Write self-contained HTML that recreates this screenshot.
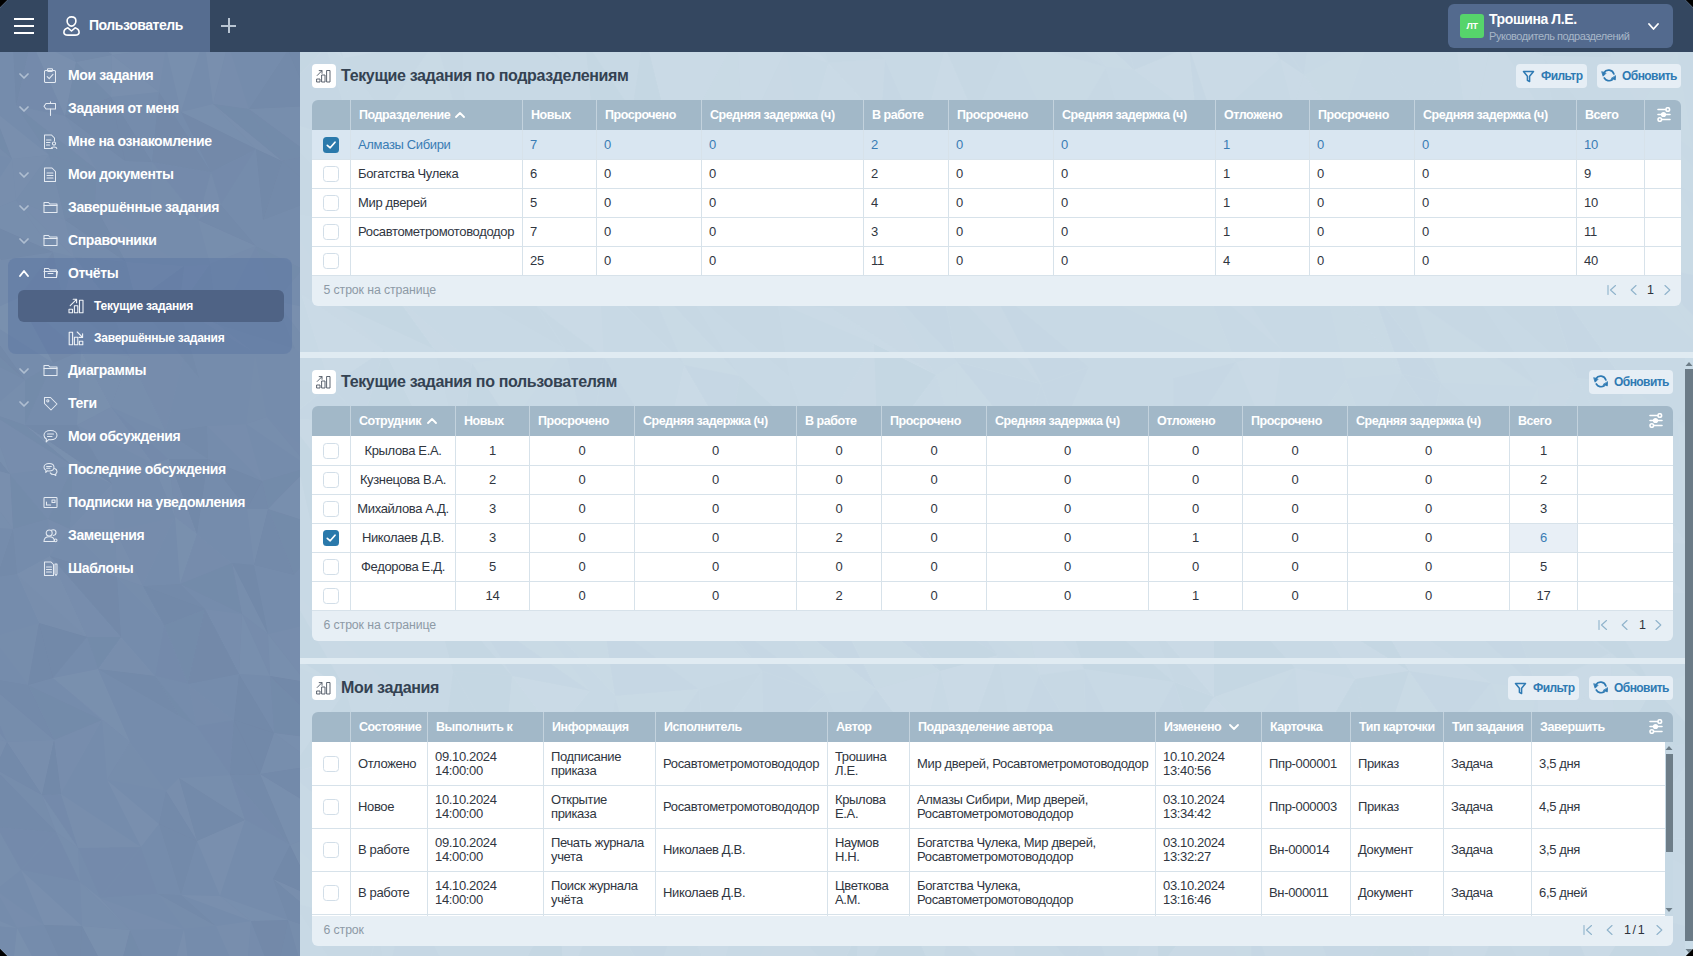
<!DOCTYPE html><html><head><meta charset="utf-8"><title>Отчёты</title><style>
html,body{margin:0;padding:0;width:1693px;height:956px;overflow:hidden;background:#000;font-family:"Liberation Sans", sans-serif;}
#app{position:absolute;left:0;top:0;width:1693px;height:956px;overflow:hidden;background:#c6d7e3;clip-path:polygon(7.5px 0,1685.5px 0,1693px 7.5px,1693px 948.5px,1685.5px 956px,7.5px 956px,0 948.5px,0 7.5px);}
</style></head><body><div id="app">
<div style="position:absolute;left:300px;top:52px;width:1393px;height:904px;background:#c8d9e5;border-radius:0px;"></div>
<svg style="position:absolute;left:300px;top:52px" width="1393" height="904"><polygon points="-92,-75 -10,-80 26,-5" fill="rgba(30,50,80,0.004)"/><polygon points="-92,-75 26,-5 -37,-1" fill="rgba(255,255,255,0.020)"/><polygon points="-10,-80 30,-74 43,6" fill="rgba(30,50,80,0.009)"/><polygon points="-10,-80 43,6 26,-5" fill="rgba(255,255,255,0.047)"/><polygon points="30,-74 75,-77 136,-11" fill="rgba(30,50,80,0.007)"/><polygon points="30,-74 136,-11 43,6" fill="rgba(255,255,255,0.049)"/><polygon points="75,-77 156,-64 163,-8" fill="rgba(255,255,255,0.046)"/><polygon points="75,-77 163,-8 136,-11" fill="rgba(30,50,80,0.008)"/><polygon points="156,-64 191,-87 265,12" fill="rgba(30,50,80,0.005)"/><polygon points="250,-63 339,-100 344,-21" fill="rgba(30,50,80,0.004)"/><polygon points="339,-100 413,-56 437,-15" fill="rgba(255,255,255,0.046)"/><polygon points="339,-100 437,-15 344,-21" fill="rgba(255,255,255,0.033)"/><polygon points="413,-56 486,-3 437,-15" fill="rgba(255,255,255,0.032)"/><polygon points="457,-72 494,-101 528,11" fill="rgba(255,255,255,0.011)"/><polygon points="457,-72 528,11 486,-3" fill="rgba(255,255,255,0.049)"/><polygon points="494,-101 585,7 528,11" fill="rgba(30,50,80,0.005)"/><polygon points="615,-90 667,-80 709,-11" fill="rgba(30,50,80,0.008)"/><polygon points="667,-80 747,-62 806,15" fill="rgba(255,255,255,0.018)"/><polygon points="667,-80 806,15 709,-11" fill="rgba(30,50,80,0.004)"/><polygon points="747,-62 811,-71 834,18" fill="rgba(30,50,80,0.008)"/><polygon points="747,-62 834,18 806,15" fill="rgba(255,255,255,0.031)"/><polygon points="811,-71 870,-70 889,-5" fill="rgba(255,255,255,0.033)"/><polygon points="811,-71 889,-5 834,18" fill="rgba(30,50,80,0.009)"/><polygon points="870,-70 928,-89 980,7" fill="rgba(255,255,255,0.037)"/><polygon points="870,-70 980,7 889,-5" fill="rgba(255,255,255,0.048)"/><polygon points="928,-89 1014,-54 1004,23" fill="rgba(30,50,80,0.007)"/><polygon points="928,-89 1004,23 980,7" fill="rgba(30,50,80,0.008)"/><polygon points="1066,-68 1156,-8 1069,-12" fill="rgba(30,50,80,0.012)"/><polygon points="1160,-99 1243,-83 1243,4" fill="rgba(30,50,80,0.007)"/><polygon points="1160,-99 1243,4 1193,-20" fill="rgba(30,50,80,0.011)"/><polygon points="1243,-83 1307,-83 1311,5" fill="rgba(30,50,80,0.007)"/><polygon points="1243,-83 1311,5 1243,4" fill="rgba(30,50,80,0.011)"/><polygon points="1307,-83 1372,-61 1377,-2" fill="rgba(255,255,255,0.012)"/><polygon points="-37,-1 26,-5 -39,61" fill="rgba(30,50,80,0.010)"/><polygon points="-37,-1 -39,61 -80,96" fill="rgba(255,255,255,0.034)"/><polygon points="26,-5 43,6 56,93" fill="rgba(255,255,255,0.015)"/><polygon points="26,-5 56,93 -39,61" fill="rgba(30,50,80,0.007)"/><polygon points="43,6 136,-11 84,63" fill="rgba(30,50,80,0.003)"/><polygon points="136,-11 163,-8 167,99" fill="rgba(30,50,80,0.005)"/><polygon points="136,-11 167,99 84,63" fill="rgba(255,255,255,0.026)"/><polygon points="163,-8 265,12 201,100" fill="rgba(255,255,255,0.013)"/><polygon points="285,-12 332,59 294,83" fill="rgba(30,50,80,0.010)"/><polygon points="344,-21 437,-15 374,100" fill="rgba(255,255,255,0.040)"/><polygon points="344,-21 374,100 332,59" fill="rgba(30,50,80,0.011)"/><polygon points="437,-15 486,-3 443,88" fill="rgba(255,255,255,0.042)"/><polygon points="437,-15 443,88 374,100" fill="rgba(255,255,255,0.032)"/><polygon points="486,-3 504,94 443,88" fill="rgba(255,255,255,0.020)"/><polygon points="528,11 585,7 581,68" fill="rgba(255,255,255,0.023)"/><polygon points="528,11 581,68 504,94" fill="rgba(255,255,255,0.046)"/><polygon points="585,7 620,89 581,68" fill="rgba(30,50,80,0.006)"/><polygon points="645,-4 709,-11 675,65" fill="rgba(30,50,80,0.003)"/><polygon points="645,-4 675,65 620,89" fill="rgba(255,255,255,0.046)"/><polygon points="709,-11 806,15 759,95" fill="rgba(255,255,255,0.030)"/><polygon points="806,15 821,67 759,95" fill="rgba(30,50,80,0.004)"/><polygon points="834,18 889,-5 896,64" fill="rgba(255,255,255,0.047)"/><polygon points="889,-5 980,7 913,67" fill="rgba(255,255,255,0.044)"/><polygon points="889,-5 913,67 896,64" fill="rgba(30,50,80,0.007)"/><polygon points="980,7 1004,23 993,57" fill="rgba(255,255,255,0.045)"/><polygon points="1004,23 1069,-12 1040,72" fill="rgba(255,255,255,0.035)"/><polygon points="1004,23 1040,72 993,57" fill="rgba(255,255,255,0.045)"/><polygon points="1069,-12 1156,-8 1119,60" fill="rgba(255,255,255,0.014)"/><polygon points="1156,-8 1193,-20 1169,97" fill="rgba(255,255,255,0.046)"/><polygon points="1193,-20 1259,86 1169,97" fill="rgba(255,255,255,0.038)"/><polygon points="1243,4 1305,82 1259,86" fill="rgba(30,50,80,0.003)"/><polygon points="1311,5 1377,-2 1339,56" fill="rgba(255,255,255,0.022)"/><polygon points="1377,-2 1465,-1 1393,98" fill="rgba(255,255,255,0.017)"/><polygon points="1377,-2 1393,98 1339,56" fill="rgba(255,255,255,0.037)"/><polygon points="-80,96 -14,163 -41,178" fill="rgba(30,50,80,0.009)"/><polygon points="-39,61 68,167 -14,163" fill="rgba(30,50,80,0.005)"/><polygon points="56,93 84,63 120,180" fill="rgba(255,255,255,0.047)"/><polygon points="84,63 167,99 169,158" fill="rgba(255,255,255,0.036)"/><polygon points="84,63 169,158 120,180" fill="rgba(255,255,255,0.049)"/><polygon points="167,99 201,100 260,175" fill="rgba(30,50,80,0.007)"/><polygon points="167,99 260,175 169,158" fill="rgba(30,50,80,0.003)"/><polygon points="201,100 294,83 320,166" fill="rgba(30,50,80,0.005)"/><polygon points="201,100 320,166 260,175" fill="rgba(255,255,255,0.042)"/><polygon points="294,83 332,59 383,176" fill="rgba(255,255,255,0.021)"/><polygon points="332,59 374,100 422,165" fill="rgba(255,255,255,0.021)"/><polygon points="332,59 422,165 383,176" fill="rgba(30,50,80,0.004)"/><polygon points="443,88 504,94 545,170" fill="rgba(255,255,255,0.028)"/><polygon points="504,94 581,68 626,159" fill="rgba(30,50,80,0.011)"/><polygon points="504,94 626,159 545,170" fill="rgba(30,50,80,0.004)"/><polygon points="581,68 620,89 675,150" fill="rgba(30,50,80,0.009)"/><polygon points="581,68 675,150 626,159" fill="rgba(30,50,80,0.009)"/><polygon points="620,89 733,161 675,150" fill="rgba(30,50,80,0.007)"/><polygon points="759,95 821,67 873,174" fill="rgba(30,50,80,0.012)"/><polygon points="759,95 873,174 769,163" fill="rgba(255,255,255,0.041)"/><polygon points="821,67 896,64 920,151" fill="rgba(255,255,255,0.034)"/><polygon points="821,67 920,151 873,174" fill="rgba(255,255,255,0.028)"/><polygon points="913,67 1026,172 980,160" fill="rgba(255,255,255,0.030)"/><polygon points="993,57 1040,72 1069,168" fill="rgba(255,255,255,0.033)"/><polygon points="993,57 1069,168 1026,172" fill="rgba(30,50,80,0.003)"/><polygon points="1040,72 1119,60 1126,161" fill="rgba(30,50,80,0.009)"/><polygon points="1040,72 1126,161 1069,168" fill="rgba(30,50,80,0.011)"/><polygon points="1119,60 1169,97 1208,143" fill="rgba(255,255,255,0.016)"/><polygon points="1119,60 1208,143 1126,161" fill="rgba(255,255,255,0.030)"/><polygon points="1169,97 1259,86 1279,156" fill="rgba(30,50,80,0.007)"/><polygon points="1169,97 1279,156 1208,143" fill="rgba(255,255,255,0.042)"/><polygon points="1259,86 1305,82 1334,176" fill="rgba(255,255,255,0.046)"/><polygon points="1259,86 1334,176 1279,156" fill="rgba(30,50,80,0.008)"/><polygon points="1305,82 1377,133 1334,176" fill="rgba(255,255,255,0.016)"/><polygon points="1339,56 1393,98 1439,165" fill="rgba(255,255,255,0.012)"/><polygon points="1339,56 1439,165 1377,133" fill="rgba(255,255,255,0.035)"/><polygon points="-41,178 -14,163 1,242" fill="rgba(30,50,80,0.005)"/><polygon points="-41,178 1,242 -92,218" fill="rgba(30,50,80,0.003)"/><polygon points="-14,163 39,253 1,242" fill="rgba(255,255,255,0.020)"/><polygon points="68,167 120,180 94,242" fill="rgba(255,255,255,0.038)"/><polygon points="120,180 148,231 94,242" fill="rgba(255,255,255,0.026)"/><polygon points="169,158 260,175 237,254" fill="rgba(30,50,80,0.004)"/><polygon points="260,175 320,166 300,228" fill="rgba(255,255,255,0.030)"/><polygon points="320,166 346,225 300,228" fill="rgba(255,255,255,0.028)"/><polygon points="383,176 385,234 346,225" fill="rgba(255,255,255,0.020)"/><polygon points="422,165 478,251 385,234" fill="rgba(255,255,255,0.026)"/><polygon points="508,174 545,170 532,256" fill="rgba(255,255,255,0.027)"/><polygon points="508,174 532,256 478,251" fill="rgba(255,255,255,0.011)"/><polygon points="626,159 640,223 571,218" fill="rgba(255,255,255,0.020)"/><polygon points="675,150 733,161 688,230" fill="rgba(30,50,80,0.005)"/><polygon points="675,150 688,230 640,223" fill="rgba(30,50,80,0.011)"/><polygon points="733,161 769,163 768,234" fill="rgba(30,50,80,0.006)"/><polygon points="769,163 873,174 813,250" fill="rgba(30,50,80,0.003)"/><polygon points="769,163 813,250 768,234" fill="rgba(30,50,80,0.009)"/><polygon points="873,174 920,151 905,232" fill="rgba(255,255,255,0.024)"/><polygon points="920,151 922,212 905,232" fill="rgba(30,50,80,0.011)"/><polygon points="980,160 1026,172 1020,212" fill="rgba(30,50,80,0.006)"/><polygon points="1026,172 1069,168 1072,237" fill="rgba(30,50,80,0.010)"/><polygon points="1026,172 1072,237 1020,212" fill="rgba(255,255,255,0.024)"/><polygon points="1069,168 1126,161 1113,248" fill="rgba(255,255,255,0.032)"/><polygon points="1069,168 1113,248 1072,237" fill="rgba(255,255,255,0.018)"/><polygon points="1126,161 1208,143 1159,217" fill="rgba(255,255,255,0.029)"/><polygon points="1126,161 1159,217 1113,248" fill="rgba(255,255,255,0.028)"/><polygon points="1279,156 1318,221 1240,211" fill="rgba(255,255,255,0.025)"/><polygon points="1334,176 1377,133 1345,212" fill="rgba(255,255,255,0.038)"/><polygon points="1334,176 1345,212 1318,221" fill="rgba(30,50,80,0.005)"/><polygon points="1377,133 1439,165 1428,231" fill="rgba(255,255,255,0.017)"/><polygon points="1377,133 1428,231 1345,212" fill="rgba(255,255,255,0.026)"/><polygon points="1,242 39,253 84,298" fill="rgba(255,255,255,0.024)"/><polygon points="1,242 84,298 30,334" fill="rgba(255,255,255,0.047)"/><polygon points="39,253 94,242 134,297" fill="rgba(30,50,80,0.010)"/><polygon points="94,242 172,311 134,297" fill="rgba(255,255,255,0.023)"/><polygon points="148,231 237,254 265,297" fill="rgba(30,50,80,0.003)"/><polygon points="237,254 300,228 304,305" fill="rgba(255,255,255,0.041)"/><polygon points="237,254 304,305 265,297" fill="rgba(30,50,80,0.003)"/><polygon points="300,228 346,225 384,313" fill="rgba(30,50,80,0.005)"/><polygon points="300,228 384,313 304,305" fill="rgba(255,255,255,0.016)"/><polygon points="346,225 385,234 440,324" fill="rgba(30,50,80,0.003)"/><polygon points="346,225 440,324 384,313" fill="rgba(255,255,255,0.027)"/><polygon points="385,234 478,251 490,326" fill="rgba(30,50,80,0.004)"/><polygon points="478,251 532,256 574,292" fill="rgba(255,255,255,0.039)"/><polygon points="532,256 571,218 636,323" fill="rgba(255,255,255,0.018)"/><polygon points="532,256 636,323 574,292" fill="rgba(255,255,255,0.039)"/><polygon points="571,218 640,223 657,310" fill="rgba(30,50,80,0.006)"/><polygon points="640,223 688,230 741,332" fill="rgba(255,255,255,0.022)"/><polygon points="640,223 741,332 657,310" fill="rgba(30,50,80,0.004)"/><polygon points="688,230 768,234 789,315" fill="rgba(255,255,255,0.011)"/><polygon points="688,230 789,315 741,332" fill="rgba(30,50,80,0.008)"/><polygon points="813,250 905,232 936,310" fill="rgba(255,255,255,0.037)"/><polygon points="905,232 922,212 982,298" fill="rgba(255,255,255,0.038)"/><polygon points="1020,212 1072,237 1102,322" fill="rgba(255,255,255,0.035)"/><polygon points="1020,212 1102,322 1046,327" fill="rgba(255,255,255,0.027)"/><polygon points="1072,237 1113,248 1141,331" fill="rgba(30,50,80,0.003)"/><polygon points="1072,237 1141,331 1102,322" fill="rgba(30,50,80,0.006)"/><polygon points="1113,248 1159,217 1238,335" fill="rgba(30,50,80,0.005)"/><polygon points="1113,248 1238,335 1141,331" fill="rgba(255,255,255,0.026)"/><polygon points="1159,217 1240,211 1277,326" fill="rgba(30,50,80,0.004)"/><polygon points="1240,211 1318,221 1326,332" fill="rgba(255,255,255,0.014)"/><polygon points="1240,211 1326,332 1277,326" fill="rgba(30,50,80,0.006)"/><polygon points="1318,221 1345,212 1412,305" fill="rgba(255,255,255,0.033)"/><polygon points="1345,212 1428,231 1435,309" fill="rgba(30,50,80,0.009)"/><polygon points="1345,212 1435,309 1412,305" fill="rgba(255,255,255,0.026)"/><polygon points="-39,319 30,334 -13,367" fill="rgba(30,50,80,0.003)"/><polygon points="-39,319 -13,367 -70,403" fill="rgba(30,50,80,0.003)"/><polygon points="30,334 84,298 63,369" fill="rgba(30,50,80,0.008)"/><polygon points="30,334 63,369 -13,367" fill="rgba(30,50,80,0.006)"/><polygon points="84,298 134,297 122,374" fill="rgba(255,255,255,0.011)"/><polygon points="84,298 122,374 63,369" fill="rgba(30,50,80,0.011)"/><polygon points="134,297 172,311 160,404" fill="rgba(30,50,80,0.005)"/><polygon points="172,311 265,297 211,373" fill="rgba(255,255,255,0.029)"/><polygon points="172,311 211,373 160,404" fill="rgba(30,50,80,0.012)"/><polygon points="265,297 304,305 289,401" fill="rgba(30,50,80,0.008)"/><polygon points="304,305 364,399 289,401" fill="rgba(30,50,80,0.008)"/><polygon points="384,313 440,324 429,390" fill="rgba(30,50,80,0.006)"/><polygon points="384,313 429,390 364,399" fill="rgba(255,255,255,0.043)"/><polygon points="440,324 490,370 429,390" fill="rgba(30,50,80,0.011)"/><polygon points="490,326 574,292 515,391" fill="rgba(255,255,255,0.015)"/><polygon points="490,326 515,391 490,370" fill="rgba(30,50,80,0.005)"/><polygon points="574,292 636,323 578,401" fill="rgba(30,50,80,0.012)"/><polygon points="574,292 578,401 515,391" fill="rgba(255,255,255,0.018)"/><polygon points="636,323 657,310 655,391" fill="rgba(255,255,255,0.037)"/><polygon points="636,323 655,391 578,401" fill="rgba(255,255,255,0.010)"/><polygon points="657,310 741,332 724,393" fill="rgba(30,50,80,0.006)"/><polygon points="657,310 724,393 655,391" fill="rgba(255,255,255,0.030)"/><polygon points="741,332 789,315 759,384" fill="rgba(30,50,80,0.008)"/><polygon points="741,332 759,384 724,393" fill="rgba(30,50,80,0.008)"/><polygon points="873,326 936,310 874,407" fill="rgba(30,50,80,0.006)"/><polygon points="936,310 982,298 970,391" fill="rgba(255,255,255,0.039)"/><polygon points="1046,327 1070,390 1012,376" fill="rgba(255,255,255,0.035)"/><polygon points="1102,322 1141,331 1133,367" fill="rgba(30,50,80,0.008)"/><polygon points="1102,322 1133,367 1070,390" fill="rgba(30,50,80,0.005)"/><polygon points="1141,331 1211,391 1133,367" fill="rgba(30,50,80,0.005)"/><polygon points="1238,335 1277,326 1243,404" fill="rgba(255,255,255,0.023)"/><polygon points="1238,335 1243,404 1211,391" fill="rgba(255,255,255,0.031)"/><polygon points="1277,326 1326,332 1311,390" fill="rgba(255,255,255,0.013)"/><polygon points="1277,326 1311,390 1243,404" fill="rgba(255,255,255,0.014)"/><polygon points="1326,332 1377,369 1311,390" fill="rgba(255,255,255,0.028)"/><polygon points="1412,305 1430,386 1377,369" fill="rgba(30,50,80,0.004)"/><polygon points="-13,367 63,369 63,465" fill="rgba(255,255,255,0.020)"/><polygon points="-13,367 63,465 10,467" fill="rgba(30,50,80,0.010)"/><polygon points="63,369 122,374 156,487" fill="rgba(30,50,80,0.009)"/><polygon points="63,369 156,487 63,465" fill="rgba(255,255,255,0.039)"/><polygon points="122,374 160,404 200,459" fill="rgba(255,255,255,0.023)"/><polygon points="211,373 289,401 341,450" fill="rgba(30,50,80,0.006)"/><polygon points="289,401 364,399 394,445" fill="rgba(30,50,80,0.010)"/><polygon points="364,399 429,390 426,455" fill="rgba(255,255,255,0.025)"/><polygon points="429,390 490,370 510,459" fill="rgba(255,255,255,0.017)"/><polygon points="429,390 510,459 426,455" fill="rgba(255,255,255,0.033)"/><polygon points="515,391 578,401 602,479" fill="rgba(255,255,255,0.038)"/><polygon points="515,391 602,479 554,474" fill="rgba(30,50,80,0.008)"/><polygon points="578,401 655,391 663,469" fill="rgba(30,50,80,0.011)"/><polygon points="655,391 724,393 729,453" fill="rgba(255,255,255,0.039)"/><polygon points="655,391 729,453 663,469" fill="rgba(255,255,255,0.012)"/><polygon points="724,393 759,384 802,465" fill="rgba(255,255,255,0.039)"/><polygon points="759,384 845,409 855,464" fill="rgba(255,255,255,0.023)"/><polygon points="759,384 855,464 802,465" fill="rgba(255,255,255,0.032)"/><polygon points="845,409 874,407 922,452" fill="rgba(30,50,80,0.006)"/><polygon points="845,409 922,452 855,464" fill="rgba(255,255,255,0.042)"/><polygon points="874,407 967,474 922,452" fill="rgba(255,255,255,0.026)"/><polygon points="970,391 1012,376 1048,469" fill="rgba(30,50,80,0.010)"/><polygon points="1012,376 1070,390 1118,473" fill="rgba(30,50,80,0.009)"/><polygon points="1012,376 1118,473 1048,469" fill="rgba(30,50,80,0.010)"/><polygon points="1070,390 1133,367 1178,455" fill="rgba(255,255,255,0.017)"/><polygon points="1070,390 1178,455 1118,473" fill="rgba(255,255,255,0.047)"/><polygon points="1133,367 1211,391 1233,483" fill="rgba(255,255,255,0.030)"/><polygon points="1133,367 1233,483 1178,455" fill="rgba(255,255,255,0.023)"/><polygon points="1211,391 1243,404 1300,459" fill="rgba(255,255,255,0.033)"/><polygon points="1211,391 1300,459 1233,483" fill="rgba(255,255,255,0.035)"/><polygon points="1243,404 1311,390 1332,488" fill="rgba(255,255,255,0.019)"/><polygon points="1243,404 1332,488 1300,459" fill="rgba(30,50,80,0.006)"/><polygon points="1311,390 1377,369 1387,492" fill="rgba(255,255,255,0.012)"/><polygon points="1311,390 1387,492 1332,488" fill="rgba(255,255,255,0.046)"/><polygon points="1377,369 1430,386 1480,450" fill="rgba(255,255,255,0.013)"/><polygon points="1377,369 1480,450 1387,492" fill="rgba(255,255,255,0.029)"/><polygon points="-17,488 -18,527 -79,557" fill="rgba(255,255,255,0.045)"/><polygon points="10,467 63,465 70,542" fill="rgba(30,50,80,0.006)"/><polygon points="63,465 156,487 128,528" fill="rgba(30,50,80,0.003)"/><polygon points="63,465 128,528 70,542" fill="rgba(30,50,80,0.009)"/><polygon points="156,487 200,459 169,555" fill="rgba(30,50,80,0.005)"/><polygon points="246,474 341,450 303,566" fill="rgba(30,50,80,0.010)"/><polygon points="341,450 394,445 376,528" fill="rgba(255,255,255,0.011)"/><polygon points="341,450 376,528 303,566" fill="rgba(255,255,255,0.015)"/><polygon points="394,445 426,455 414,558" fill="rgba(255,255,255,0.024)"/><polygon points="426,455 510,459 474,555" fill="rgba(255,255,255,0.031)"/><polygon points="426,455 474,555 414,558" fill="rgba(255,255,255,0.018)"/><polygon points="510,459 519,525 474,555" fill="rgba(255,255,255,0.031)"/><polygon points="602,479 656,547 575,524" fill="rgba(30,50,80,0.010)"/><polygon points="729,453 759,532 717,529" fill="rgba(255,255,255,0.048)"/><polygon points="802,465 855,464 850,570" fill="rgba(30,50,80,0.009)"/><polygon points="802,465 850,570 759,532" fill="rgba(255,255,255,0.046)"/><polygon points="855,464 922,452 914,527" fill="rgba(255,255,255,0.033)"/><polygon points="855,464 914,527 850,570" fill="rgba(255,255,255,0.026)"/><polygon points="922,452 967,474 933,568" fill="rgba(30,50,80,0.009)"/><polygon points="967,474 1048,469 1012,559" fill="rgba(30,50,80,0.009)"/><polygon points="967,474 1012,559 933,568" fill="rgba(30,50,80,0.005)"/><polygon points="1048,469 1066,544 1012,559" fill="rgba(255,255,255,0.014)"/><polygon points="1118,473 1178,455 1135,543" fill="rgba(30,50,80,0.010)"/><polygon points="1118,473 1135,543 1066,544" fill="rgba(255,255,255,0.040)"/><polygon points="1178,455 1233,483 1199,523" fill="rgba(30,50,80,0.009)"/><polygon points="1178,455 1199,523 1135,543" fill="rgba(255,255,255,0.014)"/><polygon points="1233,483 1300,459 1264,563" fill="rgba(255,255,255,0.024)"/><polygon points="1233,483 1264,563 1199,523" fill="rgba(30,50,80,0.002)"/><polygon points="1300,459 1332,488 1299,544" fill="rgba(30,50,80,0.006)"/><polygon points="1300,459 1299,544 1264,563" fill="rgba(255,255,255,0.031)"/><polygon points="1332,488 1385,541 1299,544" fill="rgba(255,255,255,0.045)"/><polygon points="1387,492 1480,450 1419,530" fill="rgba(255,255,255,0.040)"/><polygon points="1387,492 1419,530 1385,541" fill="rgba(255,255,255,0.050)"/><polygon points="-79,557 -18,527 46,638" fill="rgba(30,50,80,0.012)"/><polygon points="-79,557 46,638 -32,601" fill="rgba(255,255,255,0.026)"/><polygon points="-18,527 97,641 46,638" fill="rgba(255,255,255,0.021)"/><polygon points="128,528 169,555 212,624" fill="rgba(255,255,255,0.017)"/><polygon points="128,528 212,624 153,619" fill="rgba(30,50,80,0.012)"/><polygon points="169,555 211,532 290,639" fill="rgba(255,255,255,0.035)"/><polygon points="169,555 290,639 212,624" fill="rgba(30,50,80,0.009)"/><polygon points="211,532 303,566 315,644" fill="rgba(255,255,255,0.035)"/><polygon points="303,566 399,637 315,644" fill="rgba(30,50,80,0.007)"/><polygon points="376,528 414,558 462,619" fill="rgba(30,50,80,0.003)"/><polygon points="414,558 526,642 462,619" fill="rgba(30,50,80,0.009)"/><polygon points="474,555 519,525 576,637" fill="rgba(30,50,80,0.006)"/><polygon points="474,555 576,637 526,642" fill="rgba(255,255,255,0.034)"/><polygon points="519,525 575,524 640,619" fill="rgba(30,50,80,0.007)"/><polygon points="519,525 640,619 576,637" fill="rgba(255,255,255,0.035)"/><polygon points="575,524 656,547 698,603" fill="rgba(30,50,80,0.008)"/><polygon points="575,524 698,603 640,619" fill="rgba(30,50,80,0.011)"/><polygon points="656,547 717,529 739,623" fill="rgba(255,255,255,0.029)"/><polygon points="717,529 784,617 739,623" fill="rgba(255,255,255,0.039)"/><polygon points="759,532 874,630 784,617" fill="rgba(30,50,80,0.011)"/><polygon points="850,570 914,527 914,645" fill="rgba(255,255,255,0.050)"/><polygon points="850,570 914,645 874,630" fill="rgba(30,50,80,0.005)"/><polygon points="914,527 995,616 914,645" fill="rgba(30,50,80,0.011)"/><polygon points="1012,559 1066,544 1109,619" fill="rgba(30,50,80,0.012)"/><polygon points="1012,559 1109,619 1055,627" fill="rgba(255,255,255,0.045)"/><polygon points="1066,544 1191,631 1109,619" fill="rgba(255,255,255,0.042)"/><polygon points="1135,543 1199,523 1237,637" fill="rgba(30,50,80,0.008)"/><polygon points="1199,523 1264,563 1310,601" fill="rgba(255,255,255,0.021)"/><polygon points="1199,523 1310,601 1237,637" fill="rgba(30,50,80,0.003)"/><polygon points="1264,563 1299,544 1353,635" fill="rgba(30,50,80,0.010)"/><polygon points="1264,563 1353,635 1310,601" fill="rgba(30,50,80,0.005)"/><polygon points="1385,541 1445,609 1395,619" fill="rgba(30,50,80,0.011)"/><polygon points="-32,601 -12,721 -66,683" fill="rgba(255,255,255,0.025)"/><polygon points="46,638 97,641 62,702" fill="rgba(255,255,255,0.011)"/><polygon points="46,638 62,702 -12,721" fill="rgba(30,50,80,0.011)"/><polygon points="97,641 142,705 62,702" fill="rgba(255,255,255,0.017)"/><polygon points="153,619 212,624 204,709" fill="rgba(30,50,80,0.011)"/><polygon points="153,619 204,709 142,705" fill="rgba(30,50,80,0.011)"/><polygon points="212,624 290,639 255,682" fill="rgba(255,255,255,0.050)"/><polygon points="212,624 255,682 204,709" fill="rgba(255,255,255,0.035)"/><polygon points="315,644 399,637 338,723" fill="rgba(255,255,255,0.037)"/><polygon points="315,644 338,723 305,714" fill="rgba(30,50,80,0.003)"/><polygon points="399,637 462,619 404,701" fill="rgba(30,50,80,0.005)"/><polygon points="399,637 404,701 338,723" fill="rgba(30,50,80,0.005)"/><polygon points="462,619 526,642 464,702" fill="rgba(30,50,80,0.009)"/><polygon points="462,619 464,702 404,701" fill="rgba(255,255,255,0.015)"/><polygon points="526,642 545,681 464,702" fill="rgba(30,50,80,0.004)"/><polygon points="576,637 640,619 621,698" fill="rgba(255,255,255,0.048)"/><polygon points="576,637 621,698 545,681" fill="rgba(30,50,80,0.006)"/><polygon points="640,619 698,603 661,707" fill="rgba(255,255,255,0.050)"/><polygon points="698,603 714,692 661,707" fill="rgba(30,50,80,0.005)"/><polygon points="739,623 784,617 787,705" fill="rgba(30,50,80,0.004)"/><polygon points="739,623 787,705 714,692" fill="rgba(30,50,80,0.006)"/><polygon points="784,617 830,712 787,705" fill="rgba(30,50,80,0.007)"/><polygon points="874,630 914,645 890,679" fill="rgba(30,50,80,0.011)"/><polygon points="874,630 890,679 830,712" fill="rgba(30,50,80,0.009)"/><polygon points="914,645 995,616 948,680" fill="rgba(255,255,255,0.033)"/><polygon points="914,645 948,680 890,679" fill="rgba(255,255,255,0.045)"/><polygon points="995,616 1055,627 1004,714" fill="rgba(255,255,255,0.044)"/><polygon points="1055,627 1109,619 1075,721" fill="rgba(30,50,80,0.011)"/><polygon points="1055,627 1075,721 1004,714" fill="rgba(30,50,80,0.010)"/><polygon points="1109,619 1191,631 1152,680" fill="rgba(30,50,80,0.007)"/><polygon points="1109,619 1152,680 1075,721" fill="rgba(255,255,255,0.027)"/><polygon points="1191,631 1237,637 1223,723" fill="rgba(255,255,255,0.028)"/><polygon points="1237,637 1310,601 1240,721" fill="rgba(255,255,255,0.038)"/><polygon points="1310,601 1353,635 1317,701" fill="rgba(255,255,255,0.026)"/><polygon points="1310,601 1317,701 1240,721" fill="rgba(255,255,255,0.046)"/><polygon points="1353,635 1395,619 1403,690" fill="rgba(255,255,255,0.027)"/><polygon points="1353,635 1403,690 1317,701" fill="rgba(30,50,80,0.010)"/><polygon points="1395,619 1441,723 1403,690" fill="rgba(30,50,80,0.008)"/><polygon points="-66,683 -12,721 -4,795" fill="rgba(255,255,255,0.046)"/><polygon points="-66,683 -4,795 -76,778" fill="rgba(255,255,255,0.025)"/><polygon points="-12,721 62,702 38,762" fill="rgba(30,50,80,0.009)"/><polygon points="62,702 142,705 99,778" fill="rgba(30,50,80,0.011)"/><polygon points="142,705 204,709 139,758" fill="rgba(255,255,255,0.035)"/><polygon points="142,705 139,758 99,778" fill="rgba(30,50,80,0.006)"/><polygon points="204,709 255,682 214,762" fill="rgba(30,50,80,0.005)"/><polygon points="255,682 305,714 270,788" fill="rgba(30,50,80,0.012)"/><polygon points="305,714 331,769 270,788" fill="rgba(30,50,80,0.010)"/><polygon points="338,723 404,701 397,776" fill="rgba(30,50,80,0.009)"/><polygon points="404,701 464,702 466,781" fill="rgba(255,255,255,0.028)"/><polygon points="404,701 466,781 397,776" fill="rgba(30,50,80,0.009)"/><polygon points="464,702 545,681 537,802" fill="rgba(255,255,255,0.050)"/><polygon points="464,702 537,802 466,781" fill="rgba(255,255,255,0.025)"/><polygon points="545,681 621,698 584,767" fill="rgba(255,255,255,0.026)"/><polygon points="621,698 661,707 614,799" fill="rgba(255,255,255,0.017)"/><polygon points="621,698 614,799 584,767" fill="rgba(30,50,80,0.008)"/><polygon points="661,707 707,786 614,799" fill="rgba(255,255,255,0.042)"/><polygon points="787,705 830,712 822,783" fill="rgba(255,255,255,0.029)"/><polygon points="787,705 822,783 746,769" fill="rgba(255,255,255,0.044)"/><polygon points="890,679 948,680 945,765" fill="rgba(255,255,255,0.024)"/><polygon points="890,679 945,765 877,786" fill="rgba(30,50,80,0.008)"/><polygon points="948,680 1004,714 981,803" fill="rgba(255,255,255,0.042)"/><polygon points="948,680 981,803 945,765" fill="rgba(255,255,255,0.030)"/><polygon points="1004,714 1075,721 1073,798" fill="rgba(255,255,255,0.033)"/><polygon points="1004,714 1073,798 981,803" fill="rgba(255,255,255,0.014)"/><polygon points="1075,721 1152,680 1091,759" fill="rgba(30,50,80,0.005)"/><polygon points="1152,680 1223,723 1162,776" fill="rgba(255,255,255,0.027)"/><polygon points="1152,680 1162,776 1091,759" fill="rgba(255,255,255,0.019)"/><polygon points="1223,723 1240,721 1239,761" fill="rgba(30,50,80,0.008)"/><polygon points="1223,723 1239,761 1162,776" fill="rgba(30,50,80,0.011)"/><polygon points="1240,721 1317,701 1295,759" fill="rgba(255,255,255,0.044)"/><polygon points="1240,721 1295,759 1239,761" fill="rgba(255,255,255,0.049)"/><polygon points="1317,701 1403,690 1333,788" fill="rgba(30,50,80,0.006)"/><polygon points="1317,701 1333,788 1295,759" fill="rgba(30,50,80,0.011)"/><polygon points="1403,690 1415,786 1333,788" fill="rgba(30,50,80,0.003)"/><polygon points="-76,778 -4,795 -8,850" fill="rgba(255,255,255,0.043)"/><polygon points="-4,795 78,874 -8,850" fill="rgba(255,255,255,0.031)"/><polygon points="38,762 99,778 106,840" fill="rgba(255,255,255,0.014)"/><polygon points="38,762 106,840 78,874" fill="rgba(255,255,255,0.049)"/><polygon points="99,778 139,758 201,864" fill="rgba(30,50,80,0.011)"/><polygon points="99,778 201,864 106,840" fill="rgba(255,255,255,0.027)"/><polygon points="139,758 214,762 259,844" fill="rgba(255,255,255,0.020)"/><polygon points="139,758 259,844 201,864" fill="rgba(255,255,255,0.047)"/><polygon points="214,762 270,788 302,846" fill="rgba(255,255,255,0.030)"/><polygon points="214,762 302,846 259,844" fill="rgba(30,50,80,0.011)"/><polygon points="270,788 381,852 302,846" fill="rgba(30,50,80,0.007)"/><polygon points="331,769 433,881 381,852" fill="rgba(30,50,80,0.005)"/><polygon points="397,776 478,860 433,881" fill="rgba(255,255,255,0.025)"/><polygon points="466,781 537,802 558,878" fill="rgba(30,50,80,0.007)"/><polygon points="466,781 558,878 478,860" fill="rgba(30,50,80,0.007)"/><polygon points="537,802 584,767 603,852" fill="rgba(30,50,80,0.003)"/><polygon points="584,767 614,799 647,876" fill="rgba(255,255,255,0.031)"/><polygon points="584,767 647,876 603,852" fill="rgba(30,50,80,0.006)"/><polygon points="614,799 707,786 706,838" fill="rgba(255,255,255,0.014)"/><polygon points="614,799 706,838 647,876" fill="rgba(30,50,80,0.005)"/><polygon points="707,786 746,769 789,857" fill="rgba(30,50,80,0.005)"/><polygon points="746,769 822,783 855,848" fill="rgba(30,50,80,0.002)"/><polygon points="746,769 855,848 789,857" fill="rgba(30,50,80,0.012)"/><polygon points="822,783 877,786 919,838" fill="rgba(255,255,255,0.034)"/><polygon points="877,786 945,765 952,866" fill="rgba(30,50,80,0.008)"/><polygon points="877,786 952,866 919,838" fill="rgba(30,50,80,0.005)"/><polygon points="945,765 981,803 1006,849" fill="rgba(30,50,80,0.008)"/><polygon points="945,765 1006,849 952,866" fill="rgba(255,255,255,0.030)"/><polygon points="981,803 1073,798 1097,867" fill="rgba(30,50,80,0.010)"/><polygon points="981,803 1097,867 1006,849" fill="rgba(255,255,255,0.014)"/><polygon points="1073,798 1091,759 1136,841" fill="rgba(255,255,255,0.021)"/><polygon points="1091,759 1162,776 1199,869" fill="rgba(30,50,80,0.011)"/><polygon points="1091,759 1199,869 1136,841" fill="rgba(30,50,80,0.005)"/><polygon points="1162,776 1260,840 1199,869" fill="rgba(255,255,255,0.049)"/><polygon points="1239,761 1336,861 1260,840" fill="rgba(255,255,255,0.023)"/><polygon points="1333,788 1415,786 1466,855" fill="rgba(30,50,80,0.003)"/><polygon points="-60,857 -8,850 -30,931" fill="rgba(255,255,255,0.035)"/><polygon points="-60,857 -30,931 -66,927" fill="rgba(30,50,80,0.011)"/><polygon points="-8,850 78,874 60,955" fill="rgba(30,50,80,0.003)"/><polygon points="78,874 87,929 60,955" fill="rgba(30,50,80,0.002)"/><polygon points="106,840 153,929 87,929" fill="rgba(30,50,80,0.009)"/><polygon points="259,844 302,846 264,939" fill="rgba(255,255,255,0.041)"/><polygon points="259,844 264,939 214,931" fill="rgba(30,50,80,0.010)"/><polygon points="302,846 381,852 353,938" fill="rgba(30,50,80,0.007)"/><polygon points="302,846 353,938 264,939" fill="rgba(30,50,80,0.004)"/><polygon points="381,852 433,881 415,939" fill="rgba(255,255,255,0.039)"/><polygon points="381,852 415,939 353,938" fill="rgba(255,255,255,0.015)"/><polygon points="478,860 558,878 537,926" fill="rgba(30,50,80,0.003)"/><polygon points="478,860 537,926 443,948" fill="rgba(255,255,255,0.022)"/><polygon points="558,878 556,937 537,926" fill="rgba(30,50,80,0.011)"/><polygon points="603,852 647,876 641,939" fill="rgba(255,255,255,0.027)"/><polygon points="603,852 641,939 556,937" fill="rgba(30,50,80,0.010)"/><polygon points="647,876 706,838 721,943" fill="rgba(255,255,255,0.045)"/><polygon points="647,876 721,943 641,939" fill="rgba(30,50,80,0.003)"/><polygon points="706,838 789,857 774,915" fill="rgba(30,50,80,0.006)"/><polygon points="789,857 821,950 774,915" fill="rgba(30,50,80,0.009)"/><polygon points="855,848 919,838 859,916" fill="rgba(30,50,80,0.010)"/><polygon points="855,848 859,916 821,950" fill="rgba(255,255,255,0.040)"/><polygon points="919,838 952,866 950,955" fill="rgba(255,255,255,0.033)"/><polygon points="919,838 950,955 859,916" fill="rgba(255,255,255,0.024)"/><polygon points="952,866 1006,849 979,942" fill="rgba(255,255,255,0.024)"/><polygon points="952,866 979,942 950,955" fill="rgba(30,50,80,0.007)"/><polygon points="1006,849 1097,867 1042,948" fill="rgba(30,50,80,0.008)"/><polygon points="1097,867 1136,841 1126,924" fill="rgba(30,50,80,0.008)"/><polygon points="1097,867 1126,924 1042,948" fill="rgba(30,50,80,0.012)"/><polygon points="1136,841 1199,869 1166,949" fill="rgba(255,255,255,0.038)"/><polygon points="1136,841 1166,949 1126,924" fill="rgba(255,255,255,0.020)"/><polygon points="1199,869 1240,949 1166,949" fill="rgba(30,50,80,0.005)"/><polygon points="1260,840 1336,861 1294,928" fill="rgba(255,255,255,0.043)"/><polygon points="1260,840 1294,928 1240,949" fill="rgba(30,50,80,0.009)"/><polygon points="1336,861 1406,879 1381,944" fill="rgba(30,50,80,0.008)"/><polygon points="1336,861 1381,944 1294,928" fill="rgba(30,50,80,0.012)"/><polygon points="1406,879 1419,938 1381,944" fill="rgba(30,50,80,0.007)"/><polygon points="-66,927 -30,931 32,1010" fill="rgba(255,255,255,0.040)"/><polygon points="-66,927 32,1010 -37,1024" fill="rgba(255,255,255,0.022)"/><polygon points="-30,931 88,1022 32,1010" fill="rgba(255,255,255,0.038)"/><polygon points="60,955 87,929 149,1029" fill="rgba(30,50,80,0.008)"/><polygon points="60,955 149,1029 88,1022" fill="rgba(30,50,80,0.004)"/><polygon points="153,929 274,1021 208,1033" fill="rgba(255,255,255,0.041)"/><polygon points="214,931 264,939 313,1024" fill="rgba(255,255,255,0.018)"/><polygon points="214,931 313,1024 274,1021" fill="rgba(30,50,80,0.008)"/><polygon points="264,939 353,938 387,1010" fill="rgba(255,255,255,0.041)"/><polygon points="264,939 387,1010 313,1024" fill="rgba(30,50,80,0.011)"/><polygon points="415,939 443,948 504,1038" fill="rgba(30,50,80,0.012)"/><polygon points="443,948 537,926 546,998" fill="rgba(255,255,255,0.044)"/><polygon points="537,926 556,937 598,1010" fill="rgba(255,255,255,0.020)"/><polygon points="537,926 598,1010 546,998" fill="rgba(255,255,255,0.031)"/><polygon points="556,937 641,939 662,1037" fill="rgba(255,255,255,0.022)"/><polygon points="556,937 662,1037 598,1010" fill="rgba(255,255,255,0.015)"/><polygon points="641,939 721,943 711,1005" fill="rgba(30,50,80,0.005)"/><polygon points="641,939 711,1005 662,1037" fill="rgba(255,255,255,0.021)"/><polygon points="721,943 774,915 774,1021" fill="rgba(30,50,80,0.011)"/><polygon points="721,943 774,1021 711,1005" fill="rgba(255,255,255,0.044)"/><polygon points="774,915 865,999 774,1021" fill="rgba(30,50,80,0.008)"/><polygon points="821,950 891,1012 865,999" fill="rgba(30,50,80,0.009)"/><polygon points="950,955 979,942 1010,995" fill="rgba(255,255,255,0.012)"/><polygon points="979,942 1042,948 1077,1000" fill="rgba(30,50,80,0.010)"/><polygon points="979,942 1077,1000 1010,995" fill="rgba(255,255,255,0.028)"/><polygon points="1042,948 1126,924 1139,1024" fill="rgba(30,50,80,0.009)"/><polygon points="1126,924 1166,949 1217,1001" fill="rgba(30,50,80,0.008)"/><polygon points="1126,924 1217,1001 1139,1024" fill="rgba(30,50,80,0.005)"/><polygon points="1166,949 1257,1003 1217,1001" fill="rgba(255,255,255,0.048)"/><polygon points="1240,949 1294,928 1316,1026" fill="rgba(30,50,80,0.003)"/><polygon points="1294,928 1381,944 1383,1016" fill="rgba(255,255,255,0.033)"/><polygon points="1294,928 1383,1016 1316,1026" fill="rgba(255,255,255,0.050)"/><polygon points="1381,944 1419,938 1467,1013" fill="rgba(255,255,255,0.045)"/><polygon points="1381,944 1467,1013 1383,1016" fill="rgba(255,255,255,0.037)"/><polygon points="-37,1024 32,1010 5,1084" fill="rgba(255,255,255,0.011)"/><polygon points="-37,1024 5,1084 -86,1111" fill="rgba(30,50,80,0.012)"/><polygon points="88,1022 104,1079 47,1114" fill="rgba(30,50,80,0.003)"/><polygon points="149,1029 208,1033 143,1113" fill="rgba(30,50,80,0.004)"/><polygon points="149,1029 143,1113 104,1079" fill="rgba(30,50,80,0.006)"/><polygon points="208,1033 274,1021 239,1086" fill="rgba(30,50,80,0.004)"/><polygon points="274,1021 313,1024 286,1093" fill="rgba(30,50,80,0.007)"/><polygon points="274,1021 286,1093 239,1086" fill="rgba(255,255,255,0.029)"/><polygon points="313,1024 387,1010 334,1116" fill="rgba(30,50,80,0.012)"/><polygon points="313,1024 334,1116 286,1093" fill="rgba(30,50,80,0.004)"/><polygon points="387,1010 428,997 413,1079" fill="rgba(255,255,255,0.023)"/><polygon points="598,1010 662,1037 629,1076" fill="rgba(255,255,255,0.030)"/><polygon points="598,1010 629,1076 595,1097" fill="rgba(30,50,80,0.009)"/><polygon points="662,1037 711,1005 696,1080" fill="rgba(30,50,80,0.008)"/><polygon points="711,1005 774,1021 783,1093" fill="rgba(255,255,255,0.031)"/><polygon points="774,1021 865,999 832,1116" fill="rgba(255,255,255,0.014)"/><polygon points="865,999 874,1094 832,1116" fill="rgba(255,255,255,0.011)"/><polygon points="976,1034 1010,995 981,1107" fill="rgba(30,50,80,0.008)"/><polygon points="1010,995 1082,1107 981,1107" fill="rgba(255,255,255,0.013)"/><polygon points="1139,1024 1195,1073 1105,1081" fill="rgba(30,50,80,0.006)"/><polygon points="1217,1001 1257,1003 1244,1090" fill="rgba(30,50,80,0.003)"/><polygon points="1257,1003 1316,1026 1327,1096" fill="rgba(255,255,255,0.033)"/><polygon points="1257,1003 1327,1096 1244,1090" fill="rgba(30,50,80,0.006)"/><polygon points="1316,1026 1382,1083 1327,1096" fill="rgba(30,50,80,0.005)"/><polygon points="1383,1016 1439,1088 1382,1083" fill="rgba(255,255,255,0.016)"/><polygon points="-86,1111 5,1084 34,1156" fill="rgba(255,255,255,0.029)"/><polygon points="5,1084 47,1114 80,1171" fill="rgba(30,50,80,0.005)"/><polygon points="5,1084 80,1171 34,1156" fill="rgba(30,50,80,0.005)"/><polygon points="47,1114 104,1079 122,1186" fill="rgba(30,50,80,0.005)"/><polygon points="104,1079 143,1113 189,1161" fill="rgba(255,255,255,0.019)"/><polygon points="104,1079 189,1161 122,1186" fill="rgba(255,255,255,0.023)"/><polygon points="239,1086 316,1180 238,1161" fill="rgba(30,50,80,0.003)"/><polygon points="286,1093 371,1179 316,1180" fill="rgba(255,255,255,0.019)"/><polygon points="334,1116 413,1079 419,1165" fill="rgba(30,50,80,0.012)"/><polygon points="334,1116 419,1165 371,1179" fill="rgba(30,50,80,0.006)"/><polygon points="442,1091 519,1106 574,1177" fill="rgba(30,50,80,0.004)"/><polygon points="519,1106 595,1164 574,1177" fill="rgba(30,50,80,0.010)"/><polygon points="595,1097 629,1076 688,1157" fill="rgba(30,50,80,0.005)"/><polygon points="595,1097 688,1157 595,1164" fill="rgba(30,50,80,0.010)"/><polygon points="629,1076 696,1080 741,1168" fill="rgba(30,50,80,0.010)"/><polygon points="629,1076 741,1168 688,1157" fill="rgba(255,255,255,0.030)"/><polygon points="696,1080 783,1093 775,1194" fill="rgba(30,50,80,0.003)"/><polygon points="783,1093 832,1116 872,1156" fill="rgba(255,255,255,0.018)"/><polygon points="874,1094 928,1105 972,1172" fill="rgba(30,50,80,0.011)"/><polygon points="874,1094 972,1172 924,1160" fill="rgba(255,255,255,0.039)"/><polygon points="928,1105 1028,1162 972,1172" fill="rgba(255,255,255,0.015)"/><polygon points="1105,1081 1195,1073 1229,1162" fill="rgba(30,50,80,0.006)"/><polygon points="1105,1081 1229,1162 1146,1156" fill="rgba(255,255,255,0.021)"/><polygon points="1195,1073 1299,1173 1229,1162" fill="rgba(255,255,255,0.017)"/><polygon points="1244,1090 1327,1096 1349,1162" fill="rgba(30,50,80,0.003)"/><polygon points="1244,1090 1349,1162 1299,1173" fill="rgba(255,255,255,0.017)"/><polygon points="1327,1096 1382,1083 1414,1150" fill="rgba(255,255,255,0.031)"/><polygon points="1327,1096 1414,1150 1349,1162" fill="rgba(30,50,80,0.008)"/><polygon points="1382,1083 1441,1151 1414,1150" fill="rgba(30,50,80,0.011)"/><polygon points="-22,1150 34,1156 -24,1243" fill="rgba(255,255,255,0.019)"/><polygon points="-22,1150 -24,1243 -60,1258" fill="rgba(255,255,255,0.022)"/><polygon points="80,1171 122,1186 91,1235" fill="rgba(30,50,80,0.004)"/><polygon points="80,1171 91,1235 67,1252" fill="rgba(30,50,80,0.008)"/><polygon points="122,1186 189,1161 155,1230" fill="rgba(255,255,255,0.042)"/><polygon points="189,1161 238,1161 227,1227" fill="rgba(30,50,80,0.008)"/><polygon points="238,1161 316,1180 311,1244" fill="rgba(30,50,80,0.004)"/><polygon points="316,1180 352,1255 311,1244" fill="rgba(255,255,255,0.041)"/><polygon points="371,1179 419,1165 424,1263" fill="rgba(30,50,80,0.003)"/><polygon points="371,1179 424,1263 352,1255" fill="rgba(255,255,255,0.017)"/><polygon points="419,1165 466,1240 424,1263" fill="rgba(255,255,255,0.011)"/><polygon points="496,1192 574,1177 527,1225" fill="rgba(255,255,255,0.042)"/><polygon points="496,1192 527,1225 466,1240" fill="rgba(30,50,80,0.009)"/><polygon points="574,1177 595,1164 586,1258" fill="rgba(30,50,80,0.004)"/><polygon points="574,1177 586,1258 527,1225" fill="rgba(255,255,255,0.022)"/><polygon points="595,1164 688,1157 674,1262" fill="rgba(255,255,255,0.020)"/><polygon points="595,1164 674,1262 586,1258" fill="rgba(30,50,80,0.006)"/><polygon points="688,1157 741,1168 719,1253" fill="rgba(30,50,80,0.008)"/><polygon points="688,1157 719,1253 674,1262" fill="rgba(255,255,255,0.024)"/><polygon points="741,1168 748,1240 719,1253" fill="rgba(30,50,80,0.006)"/><polygon points="775,1194 872,1156 823,1255" fill="rgba(30,50,80,0.007)"/><polygon points="775,1194 823,1255 748,1240" fill="rgba(30,50,80,0.011)"/><polygon points="872,1156 924,1160 872,1242" fill="rgba(255,255,255,0.047)"/><polygon points="924,1160 951,1262 872,1242" fill="rgba(255,255,255,0.030)"/><polygon points="972,1172 1027,1253 951,1262" fill="rgba(255,255,255,0.017)"/><polygon points="1028,1162 1055,1261 1027,1253" fill="rgba(255,255,255,0.033)"/><polygon points="1093,1178 1146,1156 1150,1250" fill="rgba(255,255,255,0.048)"/><polygon points="1093,1178 1150,1250 1055,1261" fill="rgba(255,255,255,0.014)"/><polygon points="1146,1156 1184,1248 1150,1250" fill="rgba(30,50,80,0.008)"/><polygon points="1229,1162 1299,1173 1234,1258" fill="rgba(30,50,80,0.011)"/><polygon points="1229,1162 1234,1258 1184,1248" fill="rgba(30,50,80,0.006)"/><polygon points="1299,1173 1349,1162 1334,1249" fill="rgba(255,255,255,0.030)"/><polygon points="1299,1173 1334,1249 1234,1258" fill="rgba(255,255,255,0.033)"/><polygon points="1349,1162 1414,1150 1381,1264" fill="rgba(30,50,80,0.007)"/><polygon points="1349,1162 1381,1264 1334,1249" fill="rgba(255,255,255,0.030)"/><polygon points="1414,1150 1441,1151 1416,1269" fill="rgba(30,50,80,0.009)"/></svg>
<div style="position:absolute;left:0px;top:52px;width:300px;height:904px;background:#758cac;border-radius:0px;"></div>
<svg style="position:absolute;left:0px;top:52px" width="300" height="904"><polygon points="-66,-63 13,-7 -23,-15" fill="rgba(255,255,255,0.023)"/><polygon points="-15,-66 21,-56 31,-12" fill="rgba(255,255,255,0.009)"/><polygon points="-15,-66 31,-12 13,-7" fill="rgba(255,255,255,0.026)"/><polygon points="46,-52 85,-54 112,3" fill="rgba(255,255,255,0.021)"/><polygon points="46,-52 112,3 76,10" fill="rgba(30,50,80,0.017)"/><polygon points="85,-54 126,-65 166,-4" fill="rgba(255,255,255,0.032)"/><polygon points="85,-54 166,-4 112,3" fill="rgba(255,255,255,0.034)"/><polygon points="126,-65 204,-14 166,-4" fill="rgba(255,255,255,0.020)"/><polygon points="208,-61 264,-38 288,-2" fill="rgba(30,50,80,0.012)"/><polygon points="208,-61 288,-2 228,-9" fill="rgba(255,255,255,0.033)"/><polygon points="264,-38 302,-55 316,3" fill="rgba(255,255,255,0.023)"/><polygon points="264,-38 316,3 288,-2" fill="rgba(255,255,255,0.022)"/><polygon points="-23,-15 -7,58 -57,46" fill="rgba(255,255,255,0.030)"/><polygon points="13,-7 31,-12 16,54" fill="rgba(30,50,80,0.027)"/><polygon points="31,-12 76,10 65,64" fill="rgba(255,255,255,0.032)"/><polygon points="31,-12 65,64 16,54" fill="rgba(30,50,80,0.007)"/><polygon points="76,10 112,3 111,45" fill="rgba(255,255,255,0.021)"/><polygon points="76,10 111,45 65,64" fill="rgba(30,50,80,0.013)"/><polygon points="112,3 166,-4 159,40" fill="rgba(255,255,255,0.017)"/><polygon points="112,3 159,40 111,45" fill="rgba(255,255,255,0.031)"/><polygon points="166,-4 204,-14 181,60" fill="rgba(255,255,255,0.028)"/><polygon points="204,-14 228,-9 213,52" fill="rgba(255,255,255,0.033)"/><polygon points="228,-9 249,57 213,52" fill="rgba(255,255,255,0.017)"/><polygon points="288,-2 316,3 312,54" fill="rgba(30,50,80,0.030)"/><polygon points="288,-2 312,54 249,57" fill="rgba(30,50,80,0.015)"/><polygon points="-57,46 -7,58 12,107" fill="rgba(30,50,80,0.013)"/><polygon points="-57,46 12,107 -22,98" fill="rgba(255,255,255,0.010)"/><polygon points="-7,58 49,103 12,107" fill="rgba(255,255,255,0.033)"/><polygon points="16,54 65,64 97,118" fill="rgba(255,255,255,0.014)"/><polygon points="16,54 97,118 49,103" fill="rgba(30,50,80,0.011)"/><polygon points="65,64 111,45 125,109" fill="rgba(30,50,80,0.029)"/><polygon points="111,45 152,110 125,109" fill="rgba(30,50,80,0.028)"/><polygon points="159,40 211,120 152,110" fill="rgba(30,50,80,0.023)"/><polygon points="181,60 213,52 256,97" fill="rgba(255,255,255,0.028)"/><polygon points="181,60 256,97 211,120" fill="rgba(30,50,80,0.024)"/><polygon points="213,52 249,57 282,109" fill="rgba(30,50,80,0.013)"/><polygon points="213,52 282,109 256,97" fill="rgba(255,255,255,0.033)"/><polygon points="249,57 312,54 311,103" fill="rgba(255,255,255,0.020)"/><polygon points="249,57 311,103 282,109" fill="rgba(30,50,80,0.013)"/><polygon points="12,107 49,103 16,148" fill="rgba(255,255,255,0.025)"/><polygon points="12,107 16,148 -26,165" fill="rgba(255,255,255,0.023)"/><polygon points="49,103 97,118 65,168" fill="rgba(30,50,80,0.010)"/><polygon points="49,103 65,168 16,148" fill="rgba(255,255,255,0.013)"/><polygon points="97,118 95,154 65,168" fill="rgba(30,50,80,0.011)"/><polygon points="152,110 211,120 198,168" fill="rgba(30,50,80,0.009)"/><polygon points="152,110 198,168 150,168" fill="rgba(255,255,255,0.010)"/><polygon points="211,120 256,97 221,153" fill="rgba(30,50,80,0.008)"/><polygon points="211,120 221,153 198,168" fill="rgba(255,255,255,0.014)"/><polygon points="256,97 282,109 263,168" fill="rgba(30,50,80,0.027)"/><polygon points="282,109 311,103 323,145" fill="rgba(30,50,80,0.016)"/><polygon points="282,109 323,145 263,168" fill="rgba(30,50,80,0.015)"/><polygon points="-63,144 -26,165 1,208" fill="rgba(30,50,80,0.007)"/><polygon points="-63,144 1,208 -40,199" fill="rgba(255,255,255,0.034)"/><polygon points="-26,165 16,148 53,200" fill="rgba(255,255,255,0.021)"/><polygon points="-26,165 53,200 1,208" fill="rgba(30,50,80,0.027)"/><polygon points="16,148 65,168 74,205" fill="rgba(255,255,255,0.015)"/><polygon points="16,148 74,205 53,200" fill="rgba(255,255,255,0.018)"/><polygon points="65,168 95,154 126,210" fill="rgba(30,50,80,0.029)"/><polygon points="95,154 184,214 126,210" fill="rgba(255,255,255,0.008)"/><polygon points="198,168 221,153 256,194" fill="rgba(30,50,80,0.020)"/><polygon points="198,168 256,194 210,212" fill="rgba(255,255,255,0.018)"/><polygon points="-40,199 1,208 -21,264" fill="rgba(255,255,255,0.010)"/><polygon points="-40,199 -21,264 -51,257" fill="rgba(255,255,255,0.022)"/><polygon points="53,200 63,249 18,246" fill="rgba(30,50,80,0.024)"/><polygon points="74,205 126,210 107,246" fill="rgba(30,50,80,0.019)"/><polygon points="74,205 107,246 63,249" fill="rgba(255,255,255,0.029)"/><polygon points="126,210 184,214 136,249" fill="rgba(255,255,255,0.033)"/><polygon points="126,210 136,249 107,246" fill="rgba(30,50,80,0.013)"/><polygon points="184,214 210,212 179,256" fill="rgba(255,255,255,0.014)"/><polygon points="184,214 179,256 136,249" fill="rgba(30,50,80,0.023)"/><polygon points="210,212 256,194 217,272" fill="rgba(255,255,255,0.009)"/><polygon points="210,212 217,272 179,256" fill="rgba(30,50,80,0.020)"/><polygon points="256,194 303,217 276,249" fill="rgba(30,50,80,0.011)"/><polygon points="256,194 276,249 217,272" fill="rgba(30,50,80,0.006)"/><polygon points="303,217 342,218 304,255" fill="rgba(255,255,255,0.020)"/><polygon points="-51,257 -21,264 25,328" fill="rgba(30,50,80,0.027)"/><polygon points="-51,257 25,328 -30,300" fill="rgba(30,50,80,0.012)"/><polygon points="-21,264 18,246 53,311" fill="rgba(255,255,255,0.034)"/><polygon points="18,246 63,249 81,299" fill="rgba(255,255,255,0.008)"/><polygon points="18,246 81,299 53,311" fill="rgba(30,50,80,0.022)"/><polygon points="63,249 107,246 129,304" fill="rgba(30,50,80,0.012)"/><polygon points="107,246 185,301 129,304" fill="rgba(255,255,255,0.008)"/><polygon points="136,249 179,256 199,326" fill="rgba(30,50,80,0.016)"/><polygon points="179,256 217,272 255,301" fill="rgba(255,255,255,0.029)"/><polygon points="217,272 276,249 295,297" fill="rgba(30,50,80,0.011)"/><polygon points="276,249 304,255 335,327" fill="rgba(255,255,255,0.030)"/><polygon points="276,249 335,327 295,297" fill="rgba(255,255,255,0.013)"/><polygon points="-30,300 -12,360 -32,370" fill="rgba(255,255,255,0.034)"/><polygon points="25,328 53,311 25,373" fill="rgba(30,50,80,0.010)"/><polygon points="25,328 25,373 -12,360" fill="rgba(255,255,255,0.019)"/><polygon points="81,299 129,304 111,355" fill="rgba(255,255,255,0.018)"/><polygon points="81,299 111,355 77,373" fill="rgba(255,255,255,0.034)"/><polygon points="129,304 185,301 166,380" fill="rgba(255,255,255,0.008)"/><polygon points="129,304 166,380 111,355" fill="rgba(255,255,255,0.018)"/><polygon points="255,301 267,365 246,372" fill="rgba(255,255,255,0.012)"/><polygon points="-32,370 -12,360 10,422" fill="rgba(255,255,255,0.026)"/><polygon points="-32,370 10,422 -37,409" fill="rgba(30,50,80,0.015)"/><polygon points="-12,360 25,373 73,414" fill="rgba(30,50,80,0.010)"/><polygon points="-12,360 73,414 10,422" fill="rgba(255,255,255,0.015)"/><polygon points="25,373 77,373 112,432" fill="rgba(30,50,80,0.029)"/><polygon points="25,373 112,432 73,414" fill="rgba(255,255,255,0.034)"/><polygon points="77,373 111,355 153,412" fill="rgba(255,255,255,0.017)"/><polygon points="111,355 169,407 153,412" fill="rgba(30,50,80,0.007)"/><polygon points="166,380 207,374 208,407" fill="rgba(30,50,80,0.015)"/><polygon points="207,374 246,372 262,429" fill="rgba(255,255,255,0.017)"/><polygon points="246,372 267,365 309,415" fill="rgba(255,255,255,0.019)"/><polygon points="267,365 343,426 309,415" fill="rgba(255,255,255,0.008)"/><polygon points="-37,409 10,422 13,477" fill="rgba(255,255,255,0.033)"/><polygon points="-37,409 13,477 -53,473" fill="rgba(255,255,255,0.028)"/><polygon points="10,422 48,467 13,477" fill="rgba(30,50,80,0.013)"/><polygon points="73,414 70,477 48,467" fill="rgba(30,50,80,0.012)"/><polygon points="112,432 115,478 70,477" fill="rgba(255,255,255,0.015)"/><polygon points="153,412 169,407 175,465" fill="rgba(255,255,255,0.028)"/><polygon points="169,407 208,407 197,482" fill="rgba(30,50,80,0.029)"/><polygon points="169,407 197,482 175,465" fill="rgba(255,255,255,0.014)"/><polygon points="208,407 262,429 247,457" fill="rgba(30,50,80,0.029)"/><polygon points="262,429 309,415 268,457" fill="rgba(30,50,80,0.012)"/><polygon points="262,429 268,457 247,457" fill="rgba(30,50,80,0.018)"/><polygon points="309,415 333,478 268,457" fill="rgba(255,255,255,0.029)"/><polygon points="13,477 17,522 -3,525" fill="rgba(30,50,80,0.014)"/><polygon points="48,467 70,477 50,504" fill="rgba(255,255,255,0.017)"/><polygon points="70,477 115,478 117,525" fill="rgba(255,255,255,0.013)"/><polygon points="115,478 175,465 143,534" fill="rgba(255,255,255,0.009)"/><polygon points="115,478 143,534 117,525" fill="rgba(255,255,255,0.022)"/><polygon points="175,465 197,482 180,532" fill="rgba(255,255,255,0.034)"/><polygon points="197,482 232,511 180,532" fill="rgba(255,255,255,0.009)"/><polygon points="247,457 268,457 254,513" fill="rgba(255,255,255,0.021)"/><polygon points="268,457 333,478 294,523" fill="rgba(30,50,80,0.012)"/><polygon points="268,457 294,523 254,513" fill="rgba(30,50,80,0.021)"/><polygon points="17,522 50,504 87,585" fill="rgba(255,255,255,0.031)"/><polygon points="17,522 87,585 39,571" fill="rgba(255,255,255,0.023)"/><polygon points="50,504 117,525 121,585" fill="rgba(30,50,80,0.024)"/><polygon points="50,504 121,585 87,585" fill="rgba(255,255,255,0.014)"/><polygon points="117,525 143,534 164,573" fill="rgba(255,255,255,0.011)"/><polygon points="143,534 180,532 205,557" fill="rgba(30,50,80,0.014)"/><polygon points="143,534 205,557 164,573" fill="rgba(30,50,80,0.030)"/><polygon points="180,532 232,511 242,562" fill="rgba(30,50,80,0.012)"/><polygon points="232,511 254,513 268,582" fill="rgba(30,50,80,0.030)"/><polygon points="232,511 268,582 242,562" fill="rgba(255,255,255,0.020)"/><polygon points="-44,569 -20,625 -47,626" fill="rgba(255,255,255,0.015)"/><polygon points="-8,585 39,571 28,633" fill="rgba(255,255,255,0.012)"/><polygon points="39,571 87,585 53,626" fill="rgba(30,50,80,0.028)"/><polygon points="39,571 53,626 28,633" fill="rgba(30,50,80,0.027)"/><polygon points="87,585 121,585 98,617" fill="rgba(30,50,80,0.012)"/><polygon points="121,585 155,624 98,617" fill="rgba(255,255,255,0.024)"/><polygon points="164,573 205,557 188,632" fill="rgba(30,50,80,0.011)"/><polygon points="164,573 188,632 155,624" fill="rgba(30,50,80,0.009)"/><polygon points="205,557 242,562 239,622" fill="rgba(255,255,255,0.014)"/><polygon points="205,557 239,622 188,632" fill="rgba(30,50,80,0.022)"/><polygon points="242,562 268,582 270,624" fill="rgba(255,255,255,0.007)"/><polygon points="242,562 270,624 239,622" fill="rgba(255,255,255,0.026)"/><polygon points="268,582 314,571 306,630" fill="rgba(255,255,255,0.016)"/><polygon points="268,582 306,630 270,624" fill="rgba(255,255,255,0.029)"/><polygon points="-47,626 -20,625 7,690" fill="rgba(30,50,80,0.008)"/><polygon points="-47,626 7,690 -34,677" fill="rgba(255,255,255,0.018)"/><polygon points="-20,625 28,633 54,688" fill="rgba(30,50,80,0.021)"/><polygon points="-20,625 54,688 7,690" fill="rgba(255,255,255,0.012)"/><polygon points="28,633 102,668 54,688" fill="rgba(30,50,80,0.013)"/><polygon points="53,626 98,617 130,690" fill="rgba(255,255,255,0.034)"/><polygon points="53,626 130,690 102,668" fill="rgba(255,255,255,0.023)"/><polygon points="98,617 155,624 179,664" fill="rgba(30,50,80,0.016)"/><polygon points="155,624 196,674 179,664" fill="rgba(30,50,80,0.011)"/><polygon points="188,632 234,668 196,674" fill="rgba(255,255,255,0.007)"/><polygon points="239,622 274,681 234,668" fill="rgba(30,50,80,0.026)"/><polygon points="270,624 306,630 337,689" fill="rgba(30,50,80,0.027)"/><polygon points="270,624 337,689 274,681" fill="rgba(30,50,80,0.010)"/><polygon points="-34,677 7,690 -5,717" fill="rgba(255,255,255,0.022)"/><polygon points="-34,677 -5,717 -61,735" fill="rgba(30,50,80,0.028)"/><polygon points="7,690 54,688 42,743" fill="rgba(255,255,255,0.024)"/><polygon points="7,690 42,743 -5,717" fill="rgba(30,50,80,0.018)"/><polygon points="54,688 102,668 61,742" fill="rgba(255,255,255,0.015)"/><polygon points="54,688 61,742 42,743" fill="rgba(30,50,80,0.028)"/><polygon points="102,668 130,690 107,728" fill="rgba(255,255,255,0.021)"/><polygon points="130,690 166,739 107,728" fill="rgba(255,255,255,0.011)"/><polygon points="196,674 234,668 230,723" fill="rgba(30,50,80,0.007)"/><polygon points="234,668 274,681 260,722" fill="rgba(30,50,80,0.028)"/><polygon points="234,668 260,722 230,723" fill="rgba(30,50,80,0.026)"/><polygon points="274,681 337,689 317,713" fill="rgba(255,255,255,0.029)"/><polygon points="274,681 317,713 260,722" fill="rgba(255,255,255,0.018)"/><polygon points="-5,717 42,743 56,780" fill="rgba(255,255,255,0.013)"/><polygon points="-5,717 56,780 -3,775" fill="rgba(30,50,80,0.018)"/><polygon points="42,743 61,742 78,796" fill="rgba(30,50,80,0.009)"/><polygon points="42,743 78,796 56,780" fill="rgba(255,255,255,0.027)"/><polygon points="61,742 141,795 78,796" fill="rgba(255,255,255,0.023)"/><polygon points="107,728 159,772 141,795" fill="rgba(255,255,255,0.030)"/><polygon points="166,739 179,726 197,789" fill="rgba(255,255,255,0.024)"/><polygon points="166,739 197,789 159,772" fill="rgba(30,50,80,0.021)"/><polygon points="179,726 230,723 245,768" fill="rgba(255,255,255,0.019)"/><polygon points="179,726 245,768 197,789" fill="rgba(30,50,80,0.016)"/><polygon points="230,723 260,722 290,793" fill="rgba(30,50,80,0.017)"/><polygon points="230,723 290,793 245,768" fill="rgba(30,50,80,0.007)"/><polygon points="260,722 317,713 342,772" fill="rgba(30,50,80,0.018)"/><polygon points="260,722 342,772 290,793" fill="rgba(255,255,255,0.028)"/><polygon points="-26,778 -4,838 -57,845" fill="rgba(30,50,80,0.010)"/><polygon points="-3,775 56,780 21,818" fill="rgba(30,50,80,0.009)"/><polygon points="-3,775 21,818 -4,838" fill="rgba(255,255,255,0.019)"/><polygon points="56,780 78,796 80,830" fill="rgba(255,255,255,0.019)"/><polygon points="56,780 80,830 21,818" fill="rgba(30,50,80,0.007)"/><polygon points="78,796 141,795 100,846" fill="rgba(30,50,80,0.008)"/><polygon points="141,795 158,842 100,846" fill="rgba(30,50,80,0.007)"/><polygon points="159,772 197,789 181,843" fill="rgba(30,50,80,0.015)"/><polygon points="197,789 245,768 220,844" fill="rgba(255,255,255,0.031)"/><polygon points="290,793 342,772 316,846" fill="rgba(255,255,255,0.034)"/><polygon points="290,793 316,846 273,827" fill="rgba(30,50,80,0.029)"/><polygon points="-57,845 17,876 -31,872" fill="rgba(255,255,255,0.029)"/><polygon points="-4,838 44,873 17,876" fill="rgba(255,255,255,0.017)"/><polygon points="21,818 82,874 44,873" fill="rgba(255,255,255,0.032)"/><polygon points="80,830 100,846 130,878" fill="rgba(255,255,255,0.030)"/><polygon points="80,830 130,878 82,874" fill="rgba(255,255,255,0.021)"/><polygon points="100,846 184,877 130,878" fill="rgba(255,255,255,0.014)"/><polygon points="158,842 181,843 216,874" fill="rgba(30,50,80,0.014)"/><polygon points="158,842 216,874 184,877" fill="rgba(255,255,255,0.012)"/><polygon points="181,843 220,844 251,869" fill="rgba(255,255,255,0.033)"/><polygon points="220,844 288,868 251,869" fill="rgba(255,255,255,0.029)"/><polygon points="273,827 316,846 343,886" fill="rgba(255,255,255,0.022)"/><polygon points="273,827 343,886 288,868" fill="rgba(30,50,80,0.015)"/><polygon points="-31,872 12,923 -52,935" fill="rgba(30,50,80,0.020)"/><polygon points="17,876 48,934 12,923" fill="rgba(255,255,255,0.035)"/><polygon points="44,873 82,874 78,947" fill="rgba(30,50,80,0.015)"/><polygon points="82,874 130,878 115,936" fill="rgba(255,255,255,0.035)"/><polygon points="82,874 115,936 78,947" fill="rgba(30,50,80,0.015)"/><polygon points="130,878 164,951 115,936" fill="rgba(30,50,80,0.010)"/><polygon points="184,877 193,947 164,951" fill="rgba(255,255,255,0.030)"/><polygon points="216,874 251,869 245,940" fill="rgba(255,255,255,0.025)"/><polygon points="251,869 288,868 275,931" fill="rgba(30,50,80,0.022)"/><polygon points="251,869 275,931 245,940" fill="rgba(255,255,255,0.007)"/><polygon points="288,868 343,886 304,924" fill="rgba(255,255,255,0.011)"/><polygon points="288,868 304,924 275,931" fill="rgba(30,50,80,0.016)"/><polygon points="-52,935 12,923 -28,977" fill="rgba(30,50,80,0.027)"/><polygon points="-52,935 -28,977 -74,996" fill="rgba(255,255,255,0.013)"/><polygon points="12,923 48,934 7,999" fill="rgba(30,50,80,0.007)"/><polygon points="12,923 7,999 -28,977" fill="rgba(255,255,255,0.017)"/><polygon points="48,934 78,947 72,993" fill="rgba(255,255,255,0.017)"/><polygon points="48,934 72,993 7,999" fill="rgba(255,255,255,0.023)"/><polygon points="78,947 115,936 93,980" fill="rgba(30,50,80,0.011)"/><polygon points="78,947 93,980 72,993" fill="rgba(30,50,80,0.017)"/><polygon points="115,936 164,951 133,987" fill="rgba(255,255,255,0.033)"/><polygon points="115,936 133,987 93,980" fill="rgba(255,255,255,0.011)"/><polygon points="164,951 193,947 169,986" fill="rgba(255,255,255,0.025)"/><polygon points="193,947 212,1003 169,986" fill="rgba(30,50,80,0.012)"/><polygon points="245,940 275,931 275,990" fill="rgba(255,255,255,0.025)"/><polygon points="245,940 275,990 212,1003" fill="rgba(30,50,80,0.014)"/><polygon points="275,931 304,924 292,1003" fill="rgba(30,50,80,0.017)"/><polygon points="-74,996 -14,1036 -44,1035" fill="rgba(255,255,255,0.032)"/><polygon points="-28,977 7,999 41,1040" fill="rgba(255,255,255,0.022)"/><polygon points="-28,977 41,1040 -14,1036" fill="rgba(30,50,80,0.012)"/><polygon points="7,999 72,993 72,1040" fill="rgba(255,255,255,0.029)"/><polygon points="7,999 72,1040 41,1040" fill="rgba(255,255,255,0.022)"/><polygon points="72,993 106,1032 72,1040" fill="rgba(255,255,255,0.013)"/><polygon points="93,980 133,987 149,1037" fill="rgba(30,50,80,0.018)"/><polygon points="93,980 149,1037 106,1032" fill="rgba(30,50,80,0.026)"/><polygon points="133,987 169,986 187,1025" fill="rgba(255,255,255,0.016)"/><polygon points="133,987 187,1025 149,1037" fill="rgba(255,255,255,0.008)"/><polygon points="212,1003 285,1041 236,1031" fill="rgba(255,255,255,0.031)"/><polygon points="275,990 330,1045 285,1041" fill="rgba(30,50,80,0.024)"/><polygon points="-44,1035 -14,1036 -20,1086" fill="rgba(30,50,80,0.011)"/><polygon points="-44,1035 -20,1086 -49,1104" fill="rgba(255,255,255,0.014)"/><polygon points="-14,1036 41,1040 40,1081" fill="rgba(255,255,255,0.016)"/><polygon points="72,1040 89,1103 71,1097" fill="rgba(255,255,255,0.023)"/><polygon points="106,1032 149,1037 157,1096" fill="rgba(30,50,80,0.025)"/><polygon points="106,1032 157,1096 89,1103" fill="rgba(30,50,80,0.012)"/><polygon points="149,1037 187,1025 191,1102" fill="rgba(30,50,80,0.029)"/><polygon points="149,1037 191,1102 157,1096" fill="rgba(255,255,255,0.032)"/><polygon points="187,1025 236,1031 212,1093" fill="rgba(255,255,255,0.014)"/><polygon points="187,1025 212,1093 191,1102" fill="rgba(255,255,255,0.028)"/><polygon points="285,1041 330,1045 314,1102" fill="rgba(255,255,255,0.032)"/><polygon points="285,1041 314,1102 264,1103" fill="rgba(255,255,255,0.014)"/><polygon points="-49,1104 12,1150 -31,1157" fill="rgba(30,50,80,0.023)"/><polygon points="40,1081 71,1097 74,1140" fill="rgba(30,50,80,0.026)"/><polygon points="71,1097 113,1155 74,1140" fill="rgba(30,50,80,0.023)"/><polygon points="89,1103 157,1096 168,1148" fill="rgba(30,50,80,0.013)"/><polygon points="89,1103 168,1148 113,1155" fill="rgba(255,255,255,0.024)"/><polygon points="157,1096 191,1102 210,1150" fill="rgba(255,255,255,0.033)"/><polygon points="157,1096 210,1150 168,1148" fill="rgba(255,255,255,0.008)"/><polygon points="191,1102 212,1093 246,1128" fill="rgba(255,255,255,0.033)"/><polygon points="191,1102 246,1128 210,1150" fill="rgba(30,50,80,0.009)"/><polygon points="212,1093 264,1103 296,1152" fill="rgba(255,255,255,0.008)"/><polygon points="264,1103 314,1102 326,1145" fill="rgba(30,50,80,0.023)"/><polygon points="-31,1157 12,1150 -4,1188" fill="rgba(255,255,255,0.024)"/><polygon points="-31,1157 -4,1188 -47,1182" fill="rgba(30,50,80,0.026)"/><polygon points="37,1129 74,1140 75,1187" fill="rgba(255,255,255,0.031)"/><polygon points="74,1140 116,1211 75,1187" fill="rgba(255,255,255,0.013)"/><polygon points="113,1155 168,1148 148,1192" fill="rgba(255,255,255,0.008)"/><polygon points="168,1148 187,1202 148,1192" fill="rgba(30,50,80,0.026)"/><polygon points="210,1150 246,1128 237,1200" fill="rgba(30,50,80,0.013)"/><polygon points="210,1150 237,1200 187,1202" fill="rgba(255,255,255,0.010)"/><polygon points="246,1128 273,1182 237,1200" fill="rgba(255,255,255,0.016)"/><polygon points="296,1152 326,1145 297,1188" fill="rgba(30,50,80,0.007)"/><polygon points="296,1152 297,1188 273,1182" fill="rgba(255,255,255,0.015)"/></svg>
<div style="position:absolute;left:0px;top:0px;width:1693px;height:52px;background:#344760;border-radius:0px;"></div>
<div style="position:absolute;left:48px;top:0px;width:162px;height:52px;background:#566d90;border-radius:0px;"></div>
<div style="position:absolute;left:14px;top:18px;width:20px;height:2px;background:#ffffff;border-radius:0px;"></div>
<div style="position:absolute;left:14px;top:25px;width:20px;height:2px;background:#ffffff;border-radius:0px;"></div>
<div style="position:absolute;left:14px;top:32px;width:20px;height:2px;background:#ffffff;border-radius:0px;"></div>
<svg style="position:absolute;left:63px;top:16px" width="17" height="20" viewBox="0 0 17 20" fill="none" stroke="#fff" stroke-width="1.6" stroke-linecap="round" stroke-linejoin="round" ><path d="M8.5 0.9 C11.1 0.9 12.9 2.5 12.9 4.9 C12.9 7.6 10.8 10.1 8.5 10.1 C6.2 10.1 4.1 7.6 4.1 4.9 C4.1 2.5 5.9 0.9 8.5 0.9 Z"/><path d="M4.9 11.8 L8.5 15 L12.1 11.8 C14.6 12.6 16.1 14.4 16.1 16.5 C16.1 18.4 14.6 19.1 12 19.1 H5 C2.4 19.1 0.9 18.4 0.9 16.5 C0.9 14.4 2.4 12.6 4.9 11.8 Z"/></svg>
<div style="position:absolute;left:89px;top:16.5px;height:16.1px;line-height:16.1px;font-size:14px;font-weight:700;color:#fff;letter-spacing:-0.45px;white-space:nowrap;">Пользователь</div>
<div style="position:absolute;left:221px;top:25px;width:15px;height:2px;background:#b9c5d2;border-radius:0px;"></div>
<div style="position:absolute;left:227.5px;top:18px;width:2px;height:15px;background:#b9c5d2;border-radius:0px;"></div>
<div style="position:absolute;left:1448px;top:4px;width:225px;height:44px;background:#536a8e;border-radius:6px;"></div>
<div style="position:absolute;left:1460px;top:14px;width:24px;height:24px;background:#56d46b;border-radius:3px;"></div>
<div style="position:absolute;left:1460px;top:21.3px;height:10.3px;line-height:10.3px;font-size:9px;font-weight:700;color:#fff;letter-spacing:-0.3px;white-space:nowrap;width:24px;text-align:center;">ЛТ</div>
<div style="position:absolute;left:1489px;top:11.0px;height:16.1px;line-height:16.1px;font-size:14px;font-weight:700;color:#fff;letter-spacing:-0.4px;white-space:nowrap;">Трошина Л.Е.</div>
<div style="position:absolute;left:1489px;top:29.7px;height:12.6px;line-height:12.6px;font-size:11px;font-weight:400;color:#a7b6c7;letter-spacing:-0.45px;white-space:nowrap;">Руководитель подразделений</div>
<svg style="position:absolute;left:1648px;top:23px" width="11" height="7" viewBox="0 0 11 7" fill="none" stroke="#ffffff" stroke-width="1.8" stroke-linecap="round" stroke-linejoin="round" ><path d="M1 1 L5.5 6 L10 1"/></svg>
<div style="position:absolute;left:8px;top:258px;width:284px;height:96px;background:rgba(88,116,162,0.45);border-radius:8px;"></div>
<div style="position:absolute;left:18px;top:290px;width:266px;height:32px;background:#4f6385;border-radius:6px;"></div>
<svg style="position:absolute;left:19px;top:72.5px" width="10" height="6" viewBox="0 0 10 6" fill="none" stroke="#afbed1" stroke-width="1.7" stroke-linecap="round" stroke-linejoin="round" ><path d="M1 1 L5.0 5 L9 1"/></svg>
<svg style="position:absolute;left:42.5px;top:68.2px" width="15" height="15" viewBox="0 0 15 15" fill="none" stroke="#e4eaf2" stroke-width="1.05" stroke-linecap="round" stroke-linejoin="round" ><rect x="1.5" y="2.5" width="11" height="12" rx="1"/><rect x="4.5" y="0.8" width="5" height="2.6" rx="0.6"/><path d="M4.2 8.6 L6.2 10.6 L10 6.4"/></svg>
<div style="position:absolute;left:68px;top:67.0px;height:16.1px;line-height:16.1px;font-size:14px;font-weight:700;color:#ffffff;letter-spacing:-0.35px;white-space:nowrap;">Мои задания</div>
<svg style="position:absolute;left:19px;top:105.5px" width="10" height="6" viewBox="0 0 10 6" fill="none" stroke="#afbed1" stroke-width="1.7" stroke-linecap="round" stroke-linejoin="round" ><path d="M1 1 L5.0 5 L9 1"/></svg>
<svg style="position:absolute;left:42.5px;top:101.2px" width="15" height="15" viewBox="0 0 15 15" fill="none" stroke="#e4eaf2" stroke-width="1.05" stroke-linecap="round" stroke-linejoin="round" ><path d="M3 2.5 H12.5 V8 H3 L1 5.2 Z"/><path d="M7.5 8 V14.5"/><path d="M7.5 0.8 V2.5"/></svg>
<div style="position:absolute;left:68px;top:100.0px;height:16.1px;line-height:16.1px;font-size:14px;font-weight:700;color:#ffffff;letter-spacing:-0.35px;white-space:nowrap;">Задания от меня</div>
<svg style="position:absolute;left:42.5px;top:134.2px" width="15" height="15" viewBox="0 0 15 15" fill="none" stroke="#e4eaf2" stroke-width="1.05" stroke-linecap="round" stroke-linejoin="round" ><path d="M9.5 14.5 H1.5 V1 H8.5 L11.5 4 V7"/><path d="M3.5 6 H8 M3.5 8.5 H7 M3.5 11 H6.5"/><circle cx="11" cy="9.5" r="1.6"/><path d="M8.2 14.5 C8.4 12.4 13.6 12.4 13.8 14.5"/></svg>
<div style="position:absolute;left:68px;top:133.0px;height:16.1px;line-height:16.1px;font-size:14px;font-weight:700;color:#ffffff;letter-spacing:-0.35px;white-space:nowrap;">Мне на ознакомление</div>
<svg style="position:absolute;left:19px;top:171.5px" width="10" height="6" viewBox="0 0 10 6" fill="none" stroke="#afbed1" stroke-width="1.7" stroke-linecap="round" stroke-linejoin="round" ><path d="M1 1 L5.0 5 L9 1"/></svg>
<svg style="position:absolute;left:42.5px;top:167.2px" width="15" height="15" viewBox="0 0 15 15" fill="none" stroke="#e4eaf2" stroke-width="1.05" stroke-linecap="round" stroke-linejoin="round" ><path d="M1.5 1 H9 L12.5 4.5 V14.5 H1.5 Z"/><path d="M4 6 H10 M4 8.5 H10 M4 11 H10"/></svg>
<div style="position:absolute;left:68px;top:166.0px;height:16.1px;line-height:16.1px;font-size:14px;font-weight:700;color:#ffffff;letter-spacing:-0.35px;white-space:nowrap;">Мои документы</div>
<svg style="position:absolute;left:19px;top:204.5px" width="10" height="6" viewBox="0 0 10 6" fill="none" stroke="#afbed1" stroke-width="1.7" stroke-linecap="round" stroke-linejoin="round" ><path d="M1 1 L5.0 5 L9 1"/></svg>
<svg style="position:absolute;left:42.5px;top:200.2px" width="15" height="15" viewBox="0 0 15 15" fill="none" stroke="#e4eaf2" stroke-width="1.05" stroke-linecap="round" stroke-linejoin="round" ><path d="M1 2.5 H5.5 L6.8 4 H14 V12.5 H1 Z"/><path d="M1 5.5 H14"/></svg>
<div style="position:absolute;left:68px;top:199.0px;height:16.1px;line-height:16.1px;font-size:14px;font-weight:700;color:#ffffff;letter-spacing:-0.35px;white-space:nowrap;">Завершённые задания</div>
<svg style="position:absolute;left:19px;top:237.5px" width="10" height="6" viewBox="0 0 10 6" fill="none" stroke="#afbed1" stroke-width="1.7" stroke-linecap="round" stroke-linejoin="round" ><path d="M1 1 L5.0 5 L9 1"/></svg>
<svg style="position:absolute;left:42.5px;top:233.2px" width="15" height="15" viewBox="0 0 15 15" fill="none" stroke="#e4eaf2" stroke-width="1.05" stroke-linecap="round" stroke-linejoin="round" ><path d="M1 2.5 H5.5 L6.8 4 H14 V12.5 H1 Z"/><path d="M1 5.5 H14"/></svg>
<div style="position:absolute;left:68px;top:232.0px;height:16.1px;line-height:16.1px;font-size:14px;font-weight:700;color:#ffffff;letter-spacing:-0.35px;white-space:nowrap;">Справочники</div>
<svg style="position:absolute;left:19px;top:270px" width="10" height="7" viewBox="0 0 10 7" fill="none" stroke="#ffffff" stroke-width="1.9" stroke-linecap="round" stroke-linejoin="round" ><path d="M1 6 L5.0 1 L9 6"/></svg>
<svg style="position:absolute;left:42.5px;top:266.2px" width="15" height="15" viewBox="0 0 15 15" fill="none" stroke="#e4eaf2" stroke-width="1.05" stroke-linecap="round" stroke-linejoin="round" ><path d="M1.5 2.5 H5.5 L6.8 4 H13.5 V11.5 H1.5 Z"/><path d="M1 5.5 H14.5 L13.5 11.5"/><path d="M5 7.5 H10"/></svg>
<div style="position:absolute;left:68px;top:265.0px;height:16.1px;line-height:16.1px;font-size:14px;font-weight:700;color:#ffffff;letter-spacing:-0.35px;white-space:nowrap;">Отчёты</div>
<svg style="position:absolute;left:19px;top:367.5px" width="10" height="6" viewBox="0 0 10 6" fill="none" stroke="#afbed1" stroke-width="1.7" stroke-linecap="round" stroke-linejoin="round" ><path d="M1 1 L5.0 5 L9 1"/></svg>
<svg style="position:absolute;left:42.5px;top:363.2px" width="15" height="15" viewBox="0 0 15 15" fill="none" stroke="#e4eaf2" stroke-width="1.05" stroke-linecap="round" stroke-linejoin="round" ><path d="M1 2.5 H5.5 L6.8 4 H14 V12.5 H1 Z"/><path d="M1 5.5 H14"/></svg>
<div style="position:absolute;left:68px;top:362.0px;height:16.1px;line-height:16.1px;font-size:14px;font-weight:700;color:#ffffff;letter-spacing:-0.35px;white-space:nowrap;">Диаграммы</div>
<svg style="position:absolute;left:19px;top:400.5px" width="10" height="6" viewBox="0 0 10 6" fill="none" stroke="#afbed1" stroke-width="1.7" stroke-linecap="round" stroke-linejoin="round" ><path d="M1 1 L5.0 5 L9 1"/></svg>
<svg style="position:absolute;left:42.5px;top:396.2px" width="15" height="15" viewBox="0 0 15 15" fill="none" stroke="#e4eaf2" stroke-width="1.05" stroke-linecap="round" stroke-linejoin="round" ><path d="M1.5 1.5 H7.5 L14 8 L8 14 L1.5 7.5 Z"/><circle cx="4.8" cy="4.8" r="1.1"/></svg>
<div style="position:absolute;left:68px;top:395.0px;height:16.1px;line-height:16.1px;font-size:14px;font-weight:700;color:#ffffff;letter-spacing:-0.35px;white-space:nowrap;">Теги</div>
<svg style="position:absolute;left:42.5px;top:429.2px" width="15" height="15" viewBox="0 0 15 15" fill="none" stroke="#e4eaf2" stroke-width="1.05" stroke-linecap="round" stroke-linejoin="round" ><path d="M7.5 1.5 C11.5 1.5 14 3.6 14 6.2 C14 8.8 11.5 10.8 7.5 10.8 C6.8 10.8 6.2 10.7 5.6 10.6 L3.2 13 L3.4 10 C1.9 9.1 1 7.8 1 6.2 C1 3.6 3.5 1.5 7.5 1.5 Z"/><path d="M4.5 5 H10.5 M4.5 7.4 H9"/></svg>
<div style="position:absolute;left:68px;top:428.0px;height:16.1px;line-height:16.1px;font-size:14px;font-weight:700;color:#ffffff;letter-spacing:-0.35px;white-space:nowrap;">Мои обсуждения</div>
<svg style="position:absolute;left:42.5px;top:462.2px" width="15" height="15" viewBox="0 0 15 15" fill="none" stroke="#e4eaf2" stroke-width="1.05" stroke-linecap="round" stroke-linejoin="round" ><path d="M6 1.5 C9 1.5 11 3.1 11 5.2 C11 7.3 9 8.9 6 8.9 C5.5 8.9 5 8.8 4.6 8.7 L2.8 10.5 L2.9 8.2 C1.7 7.5 1 6.4 1 5.2 C1 3.1 3 1.5 6 1.5 Z"/><path d="M3.6 4.4 H8.4 M3.6 6.2 H7"/><path d="M11.6 6.5 C13.1 7 14 8.1 14 9.4 C14 10.4 13.5 11.2 12.7 11.8 L12.8 13.6 L11.3 12.5 C9.6 12.7 8 12.1 7.2 10.9"/></svg>
<div style="position:absolute;left:68px;top:461.0px;height:16.1px;line-height:16.1px;font-size:14px;font-weight:700;color:#ffffff;letter-spacing:-0.35px;white-space:nowrap;">Последние обсуждения</div>
<svg style="position:absolute;left:42.5px;top:495.2px" width="15" height="15" viewBox="0 0 15 15" fill="none" stroke="#e4eaf2" stroke-width="1.05" stroke-linecap="round" stroke-linejoin="round" ><rect x="1" y="2.5" width="13" height="10" rx="0.8"/><path d="M3.5 7 V10 H7.5"/><rect x="9" y="5" width="3" height="2.5"/></svg>
<div style="position:absolute;left:68px;top:494.0px;height:16.1px;line-height:16.1px;font-size:14px;font-weight:700;color:#ffffff;letter-spacing:-0.35px;white-space:nowrap;">Подписки на уведомления</div>
<svg style="position:absolute;left:42.5px;top:528.2px" width="15" height="15" viewBox="0 0 15 15" fill="none" stroke="#e4eaf2" stroke-width="1.05" stroke-linecap="round" stroke-linejoin="round" ><circle cx="6.2" cy="5" r="3"/><path d="M1 13.5 C1 10 3.2 8.8 6.2 8.8 C9.2 8.8 11.4 10 11.4 13.5 Z"/><path d="M8.4 2.3 C9 1.9 9.6 1.8 10.2 1.8 C11.8 1.8 13 3.1 13 4.6 C13 6.2 11.8 7.4 10.2 7.4"/><circle cx="12.6" cy="12.3" r="1.4"/></svg>
<div style="position:absolute;left:68px;top:527.0px;height:16.1px;line-height:16.1px;font-size:14px;font-weight:700;color:#ffffff;letter-spacing:-0.35px;white-space:nowrap;">Замещения</div>
<svg style="position:absolute;left:42.5px;top:561.2px" width="15" height="15" viewBox="0 0 15 15" fill="none" stroke="#e4eaf2" stroke-width="1.05" stroke-linecap="round" stroke-linejoin="round" ><path d="M1.5 1 H8 L10.5 3.5 V14.5 H1.5 Z"/><path d="M3.5 6 H8.5 M3.5 8.5 H8.5 M3.5 11 H8.5"/><path d="M12 3 H14 V13 L13 14.5 L12 13 Z"/></svg>
<div style="position:absolute;left:68px;top:560.0px;height:16.1px;line-height:16.1px;font-size:14px;font-weight:700;color:#ffffff;letter-spacing:-0.35px;white-space:nowrap;">Шаблоны</div>
<svg style="position:absolute;left:68px;top:298px" width="16" height="16" viewBox="0 0 16 16" fill="none" stroke="#eef2f7" stroke-width="1.1" stroke-linecap="round" stroke-linejoin="round" ><rect x="1" y="11.3" width="3.5" height="3.5"/><rect x="6.4" y="7.8" width="3.4" height="7"/><rect x="11.5" y="2.3" width="3.5" height="12.5"/><path d="M2.2 7.6 L8.3 1.6 M5.2 1.3 H8.6 V4.7"/></svg>
<div style="position:absolute;left:94px;top:299.6px;height:13.8px;line-height:13.8px;font-size:12px;font-weight:700;color:#ffffff;letter-spacing:-0.2px;white-space:nowrap;">Текущие задания</div>
<svg style="position:absolute;left:68px;top:330px" width="16" height="16" viewBox="0 0 16 16" fill="none" stroke="#eef2f7" stroke-width="1.1" stroke-linecap="round" stroke-linejoin="round" ><rect x="1.2" y="2.3" width="3.4" height="12.5"/><rect x="6.4" y="7.3" width="3.4" height="7.5"/><rect x="11.4" y="11.2" width="3.4" height="3.6"/><path d="M9.2 2 L14.4 7.2 M14.6 3.8 V7.4 H11"/></svg>
<div style="position:absolute;left:94px;top:331.6px;height:13.8px;line-height:13.8px;font-size:12px;font-weight:700;color:#ffffff;letter-spacing:-0.25px;white-space:nowrap;">Завершённые задания</div>
<div style="position:absolute;left:300px;top:352px;width:1393px;height:6px;background:#e0ebf2;border-radius:0px;"></div>
<div style="position:absolute;left:300px;top:658px;width:1393px;height:6px;background:#e0ebf2;border-radius:0px;"></div>
<div style="position:absolute;left:312px;top:64px;width:24px;height:24px;background:#ffffff;border-radius:4px;"></div><svg style="position:absolute;left:316px;top:69px" width="15" height="14" viewBox="0 0 15 14" fill="none" stroke="#4a5360" stroke-width="0.9" stroke-linecap="round" stroke-linejoin="round" ><rect x="1" y="10" width="3" height="3"/><rect x="6" y="6" width="3" height="7"/><rect x="11" y="1.5" width="3" height="11.5"/><path d="M1.2 6.5 L5.8 1.8 M3.2 1.6 H6 V4.3"/></svg><div style="position:absolute;left:341px;top:67.3px;height:18.4px;line-height:18.4px;font-size:16px;font-weight:700;color:#344252;letter-spacing:-0.35px;white-space:nowrap;">Текущие задания по подразделениям</div>
<div style="position:absolute;left:1516px;top:64px;width:71px;height:24px;background:#e6eef5;border-radius:4px;"></div><svg style="position:absolute;left:1522px;top:70px" width="13" height="13" viewBox="0 0 13 13" fill="none" stroke="#2f7ab3" stroke-width="1.5" stroke-linecap="round" stroke-linejoin="round" ><path d="M1.5 1.5 H11.5 L7.6 6.3 V11.5 L5.4 10.3 V6.3 Z"/></svg><div style="position:absolute;left:1541px;top:69.6px;height:13.8px;line-height:13.8px;font-size:12px;font-weight:700;color:#2f7ab3;letter-spacing:-0.55px;white-space:nowrap;">Фильтр</div>
<div style="position:absolute;left:1597px;top:64px;width:84px;height:24px;background:#e6eef5;border-radius:4px;"></div><svg style="position:absolute;left:1601.2px;top:67.6px" width="15" height="15" viewBox="0 0 15 15" fill="none" stroke="#2f7ab3" stroke-width="1.7" stroke-linecap="round" stroke-linejoin="round" ><path d="M2.9 4.6 A5.6 5.6 0 0 1 12.9 5.9"/><path d="M3.3 10.0 A5.6 5.6 0 0 0 11.2 11.8"/><path d="M0.8 4.0 L2.1 8.2 L4.9 5.4 Z" fill="#2f7ab3" stroke-width="0.8"/><path d="M14.6 8.0 L14.3 11.9 L10.6 10.5 Z" fill="#2f7ab3" stroke-width="0.8"/></svg><div style="position:absolute;left:1622px;top:69.6px;height:13.8px;line-height:13.8px;font-size:12px;font-weight:700;color:#2f7ab3;letter-spacing:-0.55px;white-space:nowrap;">Обновить</div>
<div style="position:absolute;left:312px;top:100px;width:1369px;height:30px;background:#a2b8c8;border-radius:0px;border-radius:6px 6px 0 0;"></div><div style="position:absolute;left:312px;top:130px;width:1369px;height:145px;background:#ffffff;border-radius:0px;"></div><div style="position:absolute;left:312px;top:130px;width:1369px;height:29px;background:#d9e6f1;border-radius:0px;"></div><div style="position:absolute;left:312px;top:159px;width:1369px;height:1px;background:#d7e2ea;border-radius:0px;"></div><div style="position:absolute;left:312px;top:188px;width:1369px;height:1px;background:#d7e2ea;border-radius:0px;"></div><div style="position:absolute;left:312px;top:217px;width:1369px;height:1px;background:#d7e2ea;border-radius:0px;"></div><div style="position:absolute;left:312px;top:246px;width:1369px;height:1px;background:#d7e2ea;border-radius:0px;"></div><div style="position:absolute;left:312px;top:275px;width:1369px;height:1px;background:#d7e2ea;border-radius:0px;"></div><div style="position:absolute;left:350px;top:100px;width:1px;height:30px;background:#c3d2dd;border-radius:0px;"></div><div style="position:absolute;left:350px;top:130px;width:1px;height:145px;background:#d7e2ea;border-radius:0px;"></div><div style="position:absolute;left:522px;top:100px;width:1px;height:30px;background:#c3d2dd;border-radius:0px;"></div><div style="position:absolute;left:522px;top:130px;width:1px;height:145px;background:#d7e2ea;border-radius:0px;"></div><div style="position:absolute;left:596px;top:100px;width:1px;height:30px;background:#c3d2dd;border-radius:0px;"></div><div style="position:absolute;left:596px;top:130px;width:1px;height:145px;background:#d7e2ea;border-radius:0px;"></div><div style="position:absolute;left:701px;top:100px;width:1px;height:30px;background:#c3d2dd;border-radius:0px;"></div><div style="position:absolute;left:701px;top:130px;width:1px;height:145px;background:#d7e2ea;border-radius:0px;"></div><div style="position:absolute;left:863px;top:100px;width:1px;height:30px;background:#c3d2dd;border-radius:0px;"></div><div style="position:absolute;left:863px;top:130px;width:1px;height:145px;background:#d7e2ea;border-radius:0px;"></div><div style="position:absolute;left:948px;top:100px;width:1px;height:30px;background:#c3d2dd;border-radius:0px;"></div><div style="position:absolute;left:948px;top:130px;width:1px;height:145px;background:#d7e2ea;border-radius:0px;"></div><div style="position:absolute;left:1053px;top:100px;width:1px;height:30px;background:#c3d2dd;border-radius:0px;"></div><div style="position:absolute;left:1053px;top:130px;width:1px;height:145px;background:#d7e2ea;border-radius:0px;"></div><div style="position:absolute;left:1215px;top:100px;width:1px;height:30px;background:#c3d2dd;border-radius:0px;"></div><div style="position:absolute;left:1215px;top:130px;width:1px;height:145px;background:#d7e2ea;border-radius:0px;"></div><div style="position:absolute;left:1309px;top:100px;width:1px;height:30px;background:#c3d2dd;border-radius:0px;"></div><div style="position:absolute;left:1309px;top:130px;width:1px;height:145px;background:#d7e2ea;border-radius:0px;"></div><div style="position:absolute;left:1414px;top:100px;width:1px;height:30px;background:#c3d2dd;border-radius:0px;"></div><div style="position:absolute;left:1414px;top:130px;width:1px;height:145px;background:#d7e2ea;border-radius:0px;"></div><div style="position:absolute;left:1576px;top:100px;width:1px;height:30px;background:#c3d2dd;border-radius:0px;"></div><div style="position:absolute;left:1576px;top:130px;width:1px;height:145px;background:#d7e2ea;border-radius:0px;"></div><div style="position:absolute;left:1644px;top:100px;width:1px;height:30px;background:#c3d2dd;border-radius:0px;"></div><div style="position:absolute;left:1644px;top:130px;width:1px;height:145px;background:#d7e2ea;border-radius:0px;"></div><div style="position:absolute;left:359px;top:108.3px;height:14.4px;line-height:14.4px;font-size:12.5px;font-weight:700;color:#ffffff;letter-spacing:-0.45px;white-space:nowrap;">Подразделение</div><div style="position:absolute;left:531px;top:108.3px;height:14.4px;line-height:14.4px;font-size:12.5px;font-weight:700;color:#ffffff;letter-spacing:-0.45px;white-space:nowrap;">Новых</div><div style="position:absolute;left:605px;top:108.3px;height:14.4px;line-height:14.4px;font-size:12.5px;font-weight:700;color:#ffffff;letter-spacing:-0.45px;white-space:nowrap;">Просрочено</div><div style="position:absolute;left:710px;top:108.3px;height:14.4px;line-height:14.4px;font-size:12.5px;font-weight:700;color:#ffffff;letter-spacing:-0.45px;white-space:nowrap;">Средняя задержка (ч)</div><div style="position:absolute;left:872px;top:108.3px;height:14.4px;line-height:14.4px;font-size:12.5px;font-weight:700;color:#ffffff;letter-spacing:-0.45px;white-space:nowrap;">В работе</div><div style="position:absolute;left:957px;top:108.3px;height:14.4px;line-height:14.4px;font-size:12.5px;font-weight:700;color:#ffffff;letter-spacing:-0.45px;white-space:nowrap;">Просрочено</div><div style="position:absolute;left:1062px;top:108.3px;height:14.4px;line-height:14.4px;font-size:12.5px;font-weight:700;color:#ffffff;letter-spacing:-0.45px;white-space:nowrap;">Средняя задержка (ч)</div><div style="position:absolute;left:1224px;top:108.3px;height:14.4px;line-height:14.4px;font-size:12.5px;font-weight:700;color:#ffffff;letter-spacing:-0.45px;white-space:nowrap;">Отложено</div><div style="position:absolute;left:1318px;top:108.3px;height:14.4px;line-height:14.4px;font-size:12.5px;font-weight:700;color:#ffffff;letter-spacing:-0.45px;white-space:nowrap;">Просрочено</div><div style="position:absolute;left:1423px;top:108.3px;height:14.4px;line-height:14.4px;font-size:12.5px;font-weight:700;color:#ffffff;letter-spacing:-0.45px;white-space:nowrap;">Средняя задержка (ч)</div><div style="position:absolute;left:1585px;top:108.3px;height:14.4px;line-height:14.4px;font-size:12.5px;font-weight:700;color:#ffffff;letter-spacing:-0.45px;white-space:nowrap;">Всего</div><svg style="position:absolute;left:455px;top:112px" width="10" height="6" viewBox="0 0 10 6" fill="none" stroke="#ffffff" stroke-width="1.8" stroke-linecap="round" stroke-linejoin="round" ><path d="M1 5 L5.0 1 L9 5"/></svg><svg style="position:absolute;left:1657px;top:107px" width="14" height="15" viewBox="0 0 14 15" fill="none" stroke="#fff" stroke-width="1.6" stroke-linecap="round" stroke-linejoin="round" ><path d="M1 2.5 H9 M1 7.5 H13 M5 12.5 H13"/><circle cx="10.8" cy="2.5" r="1.8" fill="#a2b8c8"/><circle cx="6.5" cy="7.5" r="1.8" fill="#ffffff"/><circle cx="2.8" cy="12.5" r="1.8" fill="#a2b8c8"/></svg><div style="position:absolute;left:312px;top:276px;width:1369px;height:30px;background:#e7eff5;border-radius:0px;border-radius:0 0 6px 6px;"></div><div style="position:absolute;left:323.5px;top:282.6px;height:14.1px;line-height:14.1px;font-size:12.3px;font-weight:400;color:#8d9aa6;letter-spacing:-0.1px;white-space:nowrap;">5 строк на странице</div><svg style="position:absolute;left:1607px;top:285.0px" width="10" height="10" viewBox="0 0 10 10" fill="none" stroke="#8fb3cb" stroke-width="1.1" stroke-linecap="round" stroke-linejoin="round" ><path d="M1 0.5 V9.5 M8.5 0.5 L3.5 5 L8.5 9.5"/></svg><svg style="position:absolute;left:1630px;top:285.0px" width="7" height="10" viewBox="0 0 7 10" fill="none" stroke="#8fb3cb" stroke-width="1.1" stroke-linecap="round" stroke-linejoin="round" ><path d="M6 0.5 L1.2 5 L6 9.5"/></svg><svg style="position:absolute;left:1664px;top:285.0px" width="7" height="10" viewBox="0 0 7 10" fill="none" stroke="#8fb3cb" stroke-width="1.1" stroke-linecap="round" stroke-linejoin="round" ><path d="M1 0.5 L5.8 5 L1 9.5"/></svg>
<div style="position:absolute;left:323px;top:136.5px;width:16px;height:16px;background:#2a79ab;border-radius:3.5px;"></div><svg style="position:absolute;left:323px;top:136.5px" width="16" height="16" viewBox="0 0 16 16" fill="none" stroke="#fff" stroke-width="1.7" stroke-linecap="round" stroke-linejoin="round" ><path d="M4.3 8.3 L7.2 10.8 L12 5.2"/></svg>
<div style="position:absolute;left:358px;top:137.5px;height:14.9px;line-height:14.9px;font-size:13px;font-weight:400;color:#3a7cb4;letter-spacing:-0.35px;white-space:nowrap;">Алмазы Сибири</div>
<div style="position:absolute;left:530px;top:137.5px;height:14.9px;line-height:14.9px;font-size:13px;font-weight:400;color:#3a7cb4;letter-spacing:-0.35px;white-space:nowrap;">7</div>
<div style="position:absolute;left:604px;top:137.5px;height:14.9px;line-height:14.9px;font-size:13px;font-weight:400;color:#3a7cb4;letter-spacing:-0.35px;white-space:nowrap;">0</div>
<div style="position:absolute;left:709px;top:137.5px;height:14.9px;line-height:14.9px;font-size:13px;font-weight:400;color:#3a7cb4;letter-spacing:-0.35px;white-space:nowrap;">0</div>
<div style="position:absolute;left:871px;top:137.5px;height:14.9px;line-height:14.9px;font-size:13px;font-weight:400;color:#3a7cb4;letter-spacing:-0.35px;white-space:nowrap;">2</div>
<div style="position:absolute;left:956px;top:137.5px;height:14.9px;line-height:14.9px;font-size:13px;font-weight:400;color:#3a7cb4;letter-spacing:-0.35px;white-space:nowrap;">0</div>
<div style="position:absolute;left:1061px;top:137.5px;height:14.9px;line-height:14.9px;font-size:13px;font-weight:400;color:#3a7cb4;letter-spacing:-0.35px;white-space:nowrap;">0</div>
<div style="position:absolute;left:1223px;top:137.5px;height:14.9px;line-height:14.9px;font-size:13px;font-weight:400;color:#3a7cb4;letter-spacing:-0.35px;white-space:nowrap;">1</div>
<div style="position:absolute;left:1317px;top:137.5px;height:14.9px;line-height:14.9px;font-size:13px;font-weight:400;color:#3a7cb4;letter-spacing:-0.35px;white-space:nowrap;">0</div>
<div style="position:absolute;left:1422px;top:137.5px;height:14.9px;line-height:14.9px;font-size:13px;font-weight:400;color:#3a7cb4;letter-spacing:-0.35px;white-space:nowrap;">0</div>
<div style="position:absolute;left:1584px;top:137.5px;height:14.9px;line-height:14.9px;font-size:13px;font-weight:400;color:#3a7cb4;letter-spacing:-0.35px;white-space:nowrap;">10</div>
<div style="position:absolute;left:323px;top:165.5px;width:14px;height:14px;background:#ffffff;border-radius:3.5px;border:1px solid #d2dee8;"></div>
<div style="position:absolute;left:358px;top:166.5px;height:14.9px;line-height:14.9px;font-size:13px;font-weight:400;color:#30363f;letter-spacing:-0.35px;white-space:nowrap;">Богатства Чулека</div>
<div style="position:absolute;left:530px;top:166.5px;height:14.9px;line-height:14.9px;font-size:13px;font-weight:400;color:#30363f;letter-spacing:-0.35px;white-space:nowrap;">6</div>
<div style="position:absolute;left:604px;top:166.5px;height:14.9px;line-height:14.9px;font-size:13px;font-weight:400;color:#30363f;letter-spacing:-0.35px;white-space:nowrap;">0</div>
<div style="position:absolute;left:709px;top:166.5px;height:14.9px;line-height:14.9px;font-size:13px;font-weight:400;color:#30363f;letter-spacing:-0.35px;white-space:nowrap;">0</div>
<div style="position:absolute;left:871px;top:166.5px;height:14.9px;line-height:14.9px;font-size:13px;font-weight:400;color:#30363f;letter-spacing:-0.35px;white-space:nowrap;">2</div>
<div style="position:absolute;left:956px;top:166.5px;height:14.9px;line-height:14.9px;font-size:13px;font-weight:400;color:#30363f;letter-spacing:-0.35px;white-space:nowrap;">0</div>
<div style="position:absolute;left:1061px;top:166.5px;height:14.9px;line-height:14.9px;font-size:13px;font-weight:400;color:#30363f;letter-spacing:-0.35px;white-space:nowrap;">0</div>
<div style="position:absolute;left:1223px;top:166.5px;height:14.9px;line-height:14.9px;font-size:13px;font-weight:400;color:#30363f;letter-spacing:-0.35px;white-space:nowrap;">1</div>
<div style="position:absolute;left:1317px;top:166.5px;height:14.9px;line-height:14.9px;font-size:13px;font-weight:400;color:#30363f;letter-spacing:-0.35px;white-space:nowrap;">0</div>
<div style="position:absolute;left:1422px;top:166.5px;height:14.9px;line-height:14.9px;font-size:13px;font-weight:400;color:#30363f;letter-spacing:-0.35px;white-space:nowrap;">0</div>
<div style="position:absolute;left:1584px;top:166.5px;height:14.9px;line-height:14.9px;font-size:13px;font-weight:400;color:#30363f;letter-spacing:-0.35px;white-space:nowrap;">9</div>
<div style="position:absolute;left:323px;top:194.5px;width:14px;height:14px;background:#ffffff;border-radius:3.5px;border:1px solid #d2dee8;"></div>
<div style="position:absolute;left:358px;top:195.5px;height:14.9px;line-height:14.9px;font-size:13px;font-weight:400;color:#30363f;letter-spacing:-0.35px;white-space:nowrap;">Мир дверей</div>
<div style="position:absolute;left:530px;top:195.5px;height:14.9px;line-height:14.9px;font-size:13px;font-weight:400;color:#30363f;letter-spacing:-0.35px;white-space:nowrap;">5</div>
<div style="position:absolute;left:604px;top:195.5px;height:14.9px;line-height:14.9px;font-size:13px;font-weight:400;color:#30363f;letter-spacing:-0.35px;white-space:nowrap;">0</div>
<div style="position:absolute;left:709px;top:195.5px;height:14.9px;line-height:14.9px;font-size:13px;font-weight:400;color:#30363f;letter-spacing:-0.35px;white-space:nowrap;">0</div>
<div style="position:absolute;left:871px;top:195.5px;height:14.9px;line-height:14.9px;font-size:13px;font-weight:400;color:#30363f;letter-spacing:-0.35px;white-space:nowrap;">4</div>
<div style="position:absolute;left:956px;top:195.5px;height:14.9px;line-height:14.9px;font-size:13px;font-weight:400;color:#30363f;letter-spacing:-0.35px;white-space:nowrap;">0</div>
<div style="position:absolute;left:1061px;top:195.5px;height:14.9px;line-height:14.9px;font-size:13px;font-weight:400;color:#30363f;letter-spacing:-0.35px;white-space:nowrap;">0</div>
<div style="position:absolute;left:1223px;top:195.5px;height:14.9px;line-height:14.9px;font-size:13px;font-weight:400;color:#30363f;letter-spacing:-0.35px;white-space:nowrap;">1</div>
<div style="position:absolute;left:1317px;top:195.5px;height:14.9px;line-height:14.9px;font-size:13px;font-weight:400;color:#30363f;letter-spacing:-0.35px;white-space:nowrap;">0</div>
<div style="position:absolute;left:1422px;top:195.5px;height:14.9px;line-height:14.9px;font-size:13px;font-weight:400;color:#30363f;letter-spacing:-0.35px;white-space:nowrap;">0</div>
<div style="position:absolute;left:1584px;top:195.5px;height:14.9px;line-height:14.9px;font-size:13px;font-weight:400;color:#30363f;letter-spacing:-0.35px;white-space:nowrap;">10</div>
<div style="position:absolute;left:323px;top:223.5px;width:14px;height:14px;background:#ffffff;border-radius:3.5px;border:1px solid #d2dee8;"></div>
<div style="position:absolute;left:358px;top:224.5px;height:14.9px;line-height:14.9px;font-size:13px;font-weight:400;color:#30363f;letter-spacing:-0.35px;white-space:nowrap;">Росавтометромотовододор</div>
<div style="position:absolute;left:530px;top:224.5px;height:14.9px;line-height:14.9px;font-size:13px;font-weight:400;color:#30363f;letter-spacing:-0.35px;white-space:nowrap;">7</div>
<div style="position:absolute;left:604px;top:224.5px;height:14.9px;line-height:14.9px;font-size:13px;font-weight:400;color:#30363f;letter-spacing:-0.35px;white-space:nowrap;">0</div>
<div style="position:absolute;left:709px;top:224.5px;height:14.9px;line-height:14.9px;font-size:13px;font-weight:400;color:#30363f;letter-spacing:-0.35px;white-space:nowrap;">0</div>
<div style="position:absolute;left:871px;top:224.5px;height:14.9px;line-height:14.9px;font-size:13px;font-weight:400;color:#30363f;letter-spacing:-0.35px;white-space:nowrap;">3</div>
<div style="position:absolute;left:956px;top:224.5px;height:14.9px;line-height:14.9px;font-size:13px;font-weight:400;color:#30363f;letter-spacing:-0.35px;white-space:nowrap;">0</div>
<div style="position:absolute;left:1061px;top:224.5px;height:14.9px;line-height:14.9px;font-size:13px;font-weight:400;color:#30363f;letter-spacing:-0.35px;white-space:nowrap;">0</div>
<div style="position:absolute;left:1223px;top:224.5px;height:14.9px;line-height:14.9px;font-size:13px;font-weight:400;color:#30363f;letter-spacing:-0.35px;white-space:nowrap;">1</div>
<div style="position:absolute;left:1317px;top:224.5px;height:14.9px;line-height:14.9px;font-size:13px;font-weight:400;color:#30363f;letter-spacing:-0.35px;white-space:nowrap;">0</div>
<div style="position:absolute;left:1422px;top:224.5px;height:14.9px;line-height:14.9px;font-size:13px;font-weight:400;color:#30363f;letter-spacing:-0.35px;white-space:nowrap;">0</div>
<div style="position:absolute;left:1584px;top:224.5px;height:14.9px;line-height:14.9px;font-size:13px;font-weight:400;color:#30363f;letter-spacing:-0.35px;white-space:nowrap;">11</div>
<div style="position:absolute;left:323px;top:252.5px;width:14px;height:14px;background:#ffffff;border-radius:3.5px;border:1px solid #d2dee8;"></div>
<div style="position:absolute;left:530px;top:253.5px;height:14.9px;line-height:14.9px;font-size:13px;font-weight:400;color:#30363f;letter-spacing:-0.35px;white-space:nowrap;">25</div>
<div style="position:absolute;left:604px;top:253.5px;height:14.9px;line-height:14.9px;font-size:13px;font-weight:400;color:#30363f;letter-spacing:-0.35px;white-space:nowrap;">0</div>
<div style="position:absolute;left:709px;top:253.5px;height:14.9px;line-height:14.9px;font-size:13px;font-weight:400;color:#30363f;letter-spacing:-0.35px;white-space:nowrap;">0</div>
<div style="position:absolute;left:871px;top:253.5px;height:14.9px;line-height:14.9px;font-size:13px;font-weight:400;color:#30363f;letter-spacing:-0.35px;white-space:nowrap;">11</div>
<div style="position:absolute;left:956px;top:253.5px;height:14.9px;line-height:14.9px;font-size:13px;font-weight:400;color:#30363f;letter-spacing:-0.35px;white-space:nowrap;">0</div>
<div style="position:absolute;left:1061px;top:253.5px;height:14.9px;line-height:14.9px;font-size:13px;font-weight:400;color:#30363f;letter-spacing:-0.35px;white-space:nowrap;">0</div>
<div style="position:absolute;left:1223px;top:253.5px;height:14.9px;line-height:14.9px;font-size:13px;font-weight:400;color:#30363f;letter-spacing:-0.35px;white-space:nowrap;">4</div>
<div style="position:absolute;left:1317px;top:253.5px;height:14.9px;line-height:14.9px;font-size:13px;font-weight:400;color:#30363f;letter-spacing:-0.35px;white-space:nowrap;">0</div>
<div style="position:absolute;left:1422px;top:253.5px;height:14.9px;line-height:14.9px;font-size:13px;font-weight:400;color:#30363f;letter-spacing:-0.35px;white-space:nowrap;">0</div>
<div style="position:absolute;left:1584px;top:253.5px;height:14.9px;line-height:14.9px;font-size:13px;font-weight:400;color:#30363f;letter-spacing:-0.35px;white-space:nowrap;">40</div>
<div style="position:absolute;left:1647px;top:283.3px;height:14.4px;line-height:14.4px;font-size:12.5px;font-weight:400;color:#2d333b;letter-spacing:0px;white-space:nowrap;">1</div>
<div style="position:absolute;left:312px;top:370px;width:24px;height:24px;background:#ffffff;border-radius:4px;"></div><svg style="position:absolute;left:316px;top:375px" width="15" height="14" viewBox="0 0 15 14" fill="none" stroke="#4a5360" stroke-width="0.9" stroke-linecap="round" stroke-linejoin="round" ><rect x="1" y="10" width="3" height="3"/><rect x="6" y="6" width="3" height="7"/><rect x="11" y="1.5" width="3" height="11.5"/><path d="M1.2 6.5 L5.8 1.8 M3.2 1.6 H6 V4.3"/></svg><div style="position:absolute;left:341px;top:373.3px;height:18.4px;line-height:18.4px;font-size:16px;font-weight:700;color:#344252;letter-spacing:-0.35px;white-space:nowrap;">Текущие задания по пользователям</div>
<div style="position:absolute;left:1589px;top:370px;width:84px;height:24px;background:#e6eef5;border-radius:4px;"></div><svg style="position:absolute;left:1593.2px;top:373.6px" width="15" height="15" viewBox="0 0 15 15" fill="none" stroke="#2f7ab3" stroke-width="1.7" stroke-linecap="round" stroke-linejoin="round" ><path d="M2.9 4.6 A5.6 5.6 0 0 1 12.9 5.9"/><path d="M3.3 10.0 A5.6 5.6 0 0 0 11.2 11.8"/><path d="M0.8 4.0 L2.1 8.2 L4.9 5.4 Z" fill="#2f7ab3" stroke-width="0.8"/><path d="M14.6 8.0 L14.3 11.9 L10.6 10.5 Z" fill="#2f7ab3" stroke-width="0.8"/></svg><div style="position:absolute;left:1614px;top:375.6px;height:13.8px;line-height:13.8px;font-size:12px;font-weight:700;color:#2f7ab3;letter-spacing:-0.55px;white-space:nowrap;">Обновить</div>
<div style="position:absolute;left:312px;top:406px;width:1361px;height:30px;background:#a2b8c8;border-radius:0px;border-radius:6px 6px 0 0;"></div><div style="position:absolute;left:312px;top:436px;width:1361px;height:174px;background:#ffffff;border-radius:0px;"></div><div style="position:absolute;left:1510px;top:524px;width:67px;height:28px;background:#e8eff6;border-radius:0px;"></div><div style="position:absolute;left:312px;top:465px;width:1361px;height:1px;background:#d7e2ea;border-radius:0px;"></div><div style="position:absolute;left:312px;top:494px;width:1361px;height:1px;background:#d7e2ea;border-radius:0px;"></div><div style="position:absolute;left:312px;top:523px;width:1361px;height:1px;background:#d7e2ea;border-radius:0px;"></div><div style="position:absolute;left:312px;top:552px;width:1361px;height:1px;background:#d7e2ea;border-radius:0px;"></div><div style="position:absolute;left:312px;top:581px;width:1361px;height:1px;background:#d7e2ea;border-radius:0px;"></div><div style="position:absolute;left:312px;top:610px;width:1361px;height:1px;background:#d7e2ea;border-radius:0px;"></div><div style="position:absolute;left:350px;top:406px;width:1px;height:30px;background:#c3d2dd;border-radius:0px;"></div><div style="position:absolute;left:350px;top:436px;width:1px;height:174px;background:#d7e2ea;border-radius:0px;"></div><div style="position:absolute;left:455px;top:406px;width:1px;height:30px;background:#c3d2dd;border-radius:0px;"></div><div style="position:absolute;left:455px;top:436px;width:1px;height:174px;background:#d7e2ea;border-radius:0px;"></div><div style="position:absolute;left:529px;top:406px;width:1px;height:30px;background:#c3d2dd;border-radius:0px;"></div><div style="position:absolute;left:529px;top:436px;width:1px;height:174px;background:#d7e2ea;border-radius:0px;"></div><div style="position:absolute;left:634px;top:406px;width:1px;height:30px;background:#c3d2dd;border-radius:0px;"></div><div style="position:absolute;left:634px;top:436px;width:1px;height:174px;background:#d7e2ea;border-radius:0px;"></div><div style="position:absolute;left:796px;top:406px;width:1px;height:30px;background:#c3d2dd;border-radius:0px;"></div><div style="position:absolute;left:796px;top:436px;width:1px;height:174px;background:#d7e2ea;border-radius:0px;"></div><div style="position:absolute;left:881px;top:406px;width:1px;height:30px;background:#c3d2dd;border-radius:0px;"></div><div style="position:absolute;left:881px;top:436px;width:1px;height:174px;background:#d7e2ea;border-radius:0px;"></div><div style="position:absolute;left:986px;top:406px;width:1px;height:30px;background:#c3d2dd;border-radius:0px;"></div><div style="position:absolute;left:986px;top:436px;width:1px;height:174px;background:#d7e2ea;border-radius:0px;"></div><div style="position:absolute;left:1148px;top:406px;width:1px;height:30px;background:#c3d2dd;border-radius:0px;"></div><div style="position:absolute;left:1148px;top:436px;width:1px;height:174px;background:#d7e2ea;border-radius:0px;"></div><div style="position:absolute;left:1242px;top:406px;width:1px;height:30px;background:#c3d2dd;border-radius:0px;"></div><div style="position:absolute;left:1242px;top:436px;width:1px;height:174px;background:#d7e2ea;border-radius:0px;"></div><div style="position:absolute;left:1347px;top:406px;width:1px;height:30px;background:#c3d2dd;border-radius:0px;"></div><div style="position:absolute;left:1347px;top:436px;width:1px;height:174px;background:#d7e2ea;border-radius:0px;"></div><div style="position:absolute;left:1509px;top:406px;width:1px;height:30px;background:#c3d2dd;border-radius:0px;"></div><div style="position:absolute;left:1509px;top:436px;width:1px;height:174px;background:#d7e2ea;border-radius:0px;"></div><div style="position:absolute;left:1577px;top:406px;width:1px;height:30px;background:#c3d2dd;border-radius:0px;"></div><div style="position:absolute;left:1577px;top:436px;width:1px;height:174px;background:#d7e2ea;border-radius:0px;"></div><div style="position:absolute;left:359px;top:414.3px;height:14.4px;line-height:14.4px;font-size:12.5px;font-weight:700;color:#ffffff;letter-spacing:-0.45px;white-space:nowrap;">Сотрудник</div><div style="position:absolute;left:464px;top:414.3px;height:14.4px;line-height:14.4px;font-size:12.5px;font-weight:700;color:#ffffff;letter-spacing:-0.45px;white-space:nowrap;">Новых</div><div style="position:absolute;left:538px;top:414.3px;height:14.4px;line-height:14.4px;font-size:12.5px;font-weight:700;color:#ffffff;letter-spacing:-0.45px;white-space:nowrap;">Просрочено</div><div style="position:absolute;left:643px;top:414.3px;height:14.4px;line-height:14.4px;font-size:12.5px;font-weight:700;color:#ffffff;letter-spacing:-0.45px;white-space:nowrap;">Средняя задержка (ч)</div><div style="position:absolute;left:805px;top:414.3px;height:14.4px;line-height:14.4px;font-size:12.5px;font-weight:700;color:#ffffff;letter-spacing:-0.45px;white-space:nowrap;">В работе</div><div style="position:absolute;left:890px;top:414.3px;height:14.4px;line-height:14.4px;font-size:12.5px;font-weight:700;color:#ffffff;letter-spacing:-0.45px;white-space:nowrap;">Просрочено</div><div style="position:absolute;left:995px;top:414.3px;height:14.4px;line-height:14.4px;font-size:12.5px;font-weight:700;color:#ffffff;letter-spacing:-0.45px;white-space:nowrap;">Средняя задержка (ч)</div><div style="position:absolute;left:1157px;top:414.3px;height:14.4px;line-height:14.4px;font-size:12.5px;font-weight:700;color:#ffffff;letter-spacing:-0.45px;white-space:nowrap;">Отложено</div><div style="position:absolute;left:1251px;top:414.3px;height:14.4px;line-height:14.4px;font-size:12.5px;font-weight:700;color:#ffffff;letter-spacing:-0.45px;white-space:nowrap;">Просрочено</div><div style="position:absolute;left:1356px;top:414.3px;height:14.4px;line-height:14.4px;font-size:12.5px;font-weight:700;color:#ffffff;letter-spacing:-0.45px;white-space:nowrap;">Средняя задержка (ч)</div><div style="position:absolute;left:1518px;top:414.3px;height:14.4px;line-height:14.4px;font-size:12.5px;font-weight:700;color:#ffffff;letter-spacing:-0.45px;white-space:nowrap;">Всего</div><svg style="position:absolute;left:427px;top:418px" width="10" height="6" viewBox="0 0 10 6" fill="none" stroke="#ffffff" stroke-width="1.8" stroke-linecap="round" stroke-linejoin="round" ><path d="M1 5 L5.0 1 L9 5"/></svg><svg style="position:absolute;left:1649px;top:413px" width="14" height="15" viewBox="0 0 14 15" fill="none" stroke="#fff" stroke-width="1.6" stroke-linecap="round" stroke-linejoin="round" ><path d="M1 2.5 H9 M1 7.5 H13 M5 12.5 H13"/><circle cx="10.8" cy="2.5" r="1.8" fill="#a2b8c8"/><circle cx="6.5" cy="7.5" r="1.8" fill="#ffffff"/><circle cx="2.8" cy="12.5" r="1.8" fill="#a2b8c8"/></svg><div style="position:absolute;left:312px;top:611px;width:1361px;height:30px;background:#e7eff5;border-radius:0px;border-radius:0 0 6px 6px;"></div><div style="position:absolute;left:323.5px;top:617.6px;height:14.1px;line-height:14.1px;font-size:12.3px;font-weight:400;color:#8d9aa6;letter-spacing:-0.1px;white-space:nowrap;">6 строк на странице</div><svg style="position:absolute;left:1598px;top:620.0px" width="10" height="10" viewBox="0 0 10 10" fill="none" stroke="#8fb3cb" stroke-width="1.1" stroke-linecap="round" stroke-linejoin="round" ><path d="M1 0.5 V9.5 M8.5 0.5 L3.5 5 L8.5 9.5"/></svg><svg style="position:absolute;left:1621px;top:620.0px" width="7" height="10" viewBox="0 0 7 10" fill="none" stroke="#8fb3cb" stroke-width="1.1" stroke-linecap="round" stroke-linejoin="round" ><path d="M6 0.5 L1.2 5 L6 9.5"/></svg><svg style="position:absolute;left:1655px;top:620.0px" width="7" height="10" viewBox="0 0 7 10" fill="none" stroke="#8fb3cb" stroke-width="1.1" stroke-linecap="round" stroke-linejoin="round" ><path d="M1 0.5 L5.8 5 L1 9.5"/></svg>
<div style="position:absolute;left:323px;top:442.5px;width:14px;height:14px;background:#ffffff;border-radius:3.5px;border:1px solid #d2dee8;"></div>
<div style="position:absolute;left:350.5px;top:443.5px;height:14.9px;line-height:14.9px;font-size:13px;font-weight:400;color:#30363f;letter-spacing:-0.35px;white-space:nowrap;width:105px;text-align:center;">Крылова Е.А.</div>
<div style="position:absolute;left:455.5px;top:443.5px;height:14.9px;line-height:14.9px;font-size:13px;font-weight:400;color:#30363f;letter-spacing:-0.35px;white-space:nowrap;width:74px;text-align:center;">1</div>
<div style="position:absolute;left:529.5px;top:443.5px;height:14.9px;line-height:14.9px;font-size:13px;font-weight:400;color:#30363f;letter-spacing:-0.35px;white-space:nowrap;width:105px;text-align:center;">0</div>
<div style="position:absolute;left:634.5px;top:443.5px;height:14.9px;line-height:14.9px;font-size:13px;font-weight:400;color:#30363f;letter-spacing:-0.35px;white-space:nowrap;width:162px;text-align:center;">0</div>
<div style="position:absolute;left:796.5px;top:443.5px;height:14.9px;line-height:14.9px;font-size:13px;font-weight:400;color:#30363f;letter-spacing:-0.35px;white-space:nowrap;width:85px;text-align:center;">0</div>
<div style="position:absolute;left:881.5px;top:443.5px;height:14.9px;line-height:14.9px;font-size:13px;font-weight:400;color:#30363f;letter-spacing:-0.35px;white-space:nowrap;width:105px;text-align:center;">0</div>
<div style="position:absolute;left:986.5px;top:443.5px;height:14.9px;line-height:14.9px;font-size:13px;font-weight:400;color:#30363f;letter-spacing:-0.35px;white-space:nowrap;width:162px;text-align:center;">0</div>
<div style="position:absolute;left:1148.5px;top:443.5px;height:14.9px;line-height:14.9px;font-size:13px;font-weight:400;color:#30363f;letter-spacing:-0.35px;white-space:nowrap;width:94px;text-align:center;">0</div>
<div style="position:absolute;left:1242.5px;top:443.5px;height:14.9px;line-height:14.9px;font-size:13px;font-weight:400;color:#30363f;letter-spacing:-0.35px;white-space:nowrap;width:105px;text-align:center;">0</div>
<div style="position:absolute;left:1347.5px;top:443.5px;height:14.9px;line-height:14.9px;font-size:13px;font-weight:400;color:#30363f;letter-spacing:-0.35px;white-space:nowrap;width:162px;text-align:center;">0</div>
<div style="position:absolute;left:1509.5px;top:443.5px;height:14.9px;line-height:14.9px;font-size:13px;font-weight:400;color:#30363f;letter-spacing:-0.35px;white-space:nowrap;width:68px;text-align:center;">1</div>
<div style="position:absolute;left:323px;top:471.5px;width:14px;height:14px;background:#ffffff;border-radius:3.5px;border:1px solid #d2dee8;"></div>
<div style="position:absolute;left:350.5px;top:472.5px;height:14.9px;line-height:14.9px;font-size:13px;font-weight:400;color:#30363f;letter-spacing:-0.35px;white-space:nowrap;width:105px;text-align:center;">Кузнецова В.А.</div>
<div style="position:absolute;left:455.5px;top:472.5px;height:14.9px;line-height:14.9px;font-size:13px;font-weight:400;color:#30363f;letter-spacing:-0.35px;white-space:nowrap;width:74px;text-align:center;">2</div>
<div style="position:absolute;left:529.5px;top:472.5px;height:14.9px;line-height:14.9px;font-size:13px;font-weight:400;color:#30363f;letter-spacing:-0.35px;white-space:nowrap;width:105px;text-align:center;">0</div>
<div style="position:absolute;left:634.5px;top:472.5px;height:14.9px;line-height:14.9px;font-size:13px;font-weight:400;color:#30363f;letter-spacing:-0.35px;white-space:nowrap;width:162px;text-align:center;">0</div>
<div style="position:absolute;left:796.5px;top:472.5px;height:14.9px;line-height:14.9px;font-size:13px;font-weight:400;color:#30363f;letter-spacing:-0.35px;white-space:nowrap;width:85px;text-align:center;">0</div>
<div style="position:absolute;left:881.5px;top:472.5px;height:14.9px;line-height:14.9px;font-size:13px;font-weight:400;color:#30363f;letter-spacing:-0.35px;white-space:nowrap;width:105px;text-align:center;">0</div>
<div style="position:absolute;left:986.5px;top:472.5px;height:14.9px;line-height:14.9px;font-size:13px;font-weight:400;color:#30363f;letter-spacing:-0.35px;white-space:nowrap;width:162px;text-align:center;">0</div>
<div style="position:absolute;left:1148.5px;top:472.5px;height:14.9px;line-height:14.9px;font-size:13px;font-weight:400;color:#30363f;letter-spacing:-0.35px;white-space:nowrap;width:94px;text-align:center;">0</div>
<div style="position:absolute;left:1242.5px;top:472.5px;height:14.9px;line-height:14.9px;font-size:13px;font-weight:400;color:#30363f;letter-spacing:-0.35px;white-space:nowrap;width:105px;text-align:center;">0</div>
<div style="position:absolute;left:1347.5px;top:472.5px;height:14.9px;line-height:14.9px;font-size:13px;font-weight:400;color:#30363f;letter-spacing:-0.35px;white-space:nowrap;width:162px;text-align:center;">0</div>
<div style="position:absolute;left:1509.5px;top:472.5px;height:14.9px;line-height:14.9px;font-size:13px;font-weight:400;color:#30363f;letter-spacing:-0.35px;white-space:nowrap;width:68px;text-align:center;">2</div>
<div style="position:absolute;left:323px;top:500.5px;width:14px;height:14px;background:#ffffff;border-radius:3.5px;border:1px solid #d2dee8;"></div>
<div style="position:absolute;left:350.5px;top:501.5px;height:14.9px;line-height:14.9px;font-size:13px;font-weight:400;color:#30363f;letter-spacing:-0.35px;white-space:nowrap;width:105px;text-align:center;">Михайлова А.Д.</div>
<div style="position:absolute;left:455.5px;top:501.5px;height:14.9px;line-height:14.9px;font-size:13px;font-weight:400;color:#30363f;letter-spacing:-0.35px;white-space:nowrap;width:74px;text-align:center;">3</div>
<div style="position:absolute;left:529.5px;top:501.5px;height:14.9px;line-height:14.9px;font-size:13px;font-weight:400;color:#30363f;letter-spacing:-0.35px;white-space:nowrap;width:105px;text-align:center;">0</div>
<div style="position:absolute;left:634.5px;top:501.5px;height:14.9px;line-height:14.9px;font-size:13px;font-weight:400;color:#30363f;letter-spacing:-0.35px;white-space:nowrap;width:162px;text-align:center;">0</div>
<div style="position:absolute;left:796.5px;top:501.5px;height:14.9px;line-height:14.9px;font-size:13px;font-weight:400;color:#30363f;letter-spacing:-0.35px;white-space:nowrap;width:85px;text-align:center;">0</div>
<div style="position:absolute;left:881.5px;top:501.5px;height:14.9px;line-height:14.9px;font-size:13px;font-weight:400;color:#30363f;letter-spacing:-0.35px;white-space:nowrap;width:105px;text-align:center;">0</div>
<div style="position:absolute;left:986.5px;top:501.5px;height:14.9px;line-height:14.9px;font-size:13px;font-weight:400;color:#30363f;letter-spacing:-0.35px;white-space:nowrap;width:162px;text-align:center;">0</div>
<div style="position:absolute;left:1148.5px;top:501.5px;height:14.9px;line-height:14.9px;font-size:13px;font-weight:400;color:#30363f;letter-spacing:-0.35px;white-space:nowrap;width:94px;text-align:center;">0</div>
<div style="position:absolute;left:1242.5px;top:501.5px;height:14.9px;line-height:14.9px;font-size:13px;font-weight:400;color:#30363f;letter-spacing:-0.35px;white-space:nowrap;width:105px;text-align:center;">0</div>
<div style="position:absolute;left:1347.5px;top:501.5px;height:14.9px;line-height:14.9px;font-size:13px;font-weight:400;color:#30363f;letter-spacing:-0.35px;white-space:nowrap;width:162px;text-align:center;">0</div>
<div style="position:absolute;left:1509.5px;top:501.5px;height:14.9px;line-height:14.9px;font-size:13px;font-weight:400;color:#30363f;letter-spacing:-0.35px;white-space:nowrap;width:68px;text-align:center;">3</div>
<div style="position:absolute;left:323px;top:529.5px;width:16px;height:16px;background:#2a79ab;border-radius:3.5px;"></div><svg style="position:absolute;left:323px;top:529.5px" width="16" height="16" viewBox="0 0 16 16" fill="none" stroke="#fff" stroke-width="1.7" stroke-linecap="round" stroke-linejoin="round" ><path d="M4.3 8.3 L7.2 10.8 L12 5.2"/></svg>
<div style="position:absolute;left:350.5px;top:530.5px;height:14.9px;line-height:14.9px;font-size:13px;font-weight:400;color:#30363f;letter-spacing:-0.35px;white-space:nowrap;width:105px;text-align:center;">Николаев Д.В.</div>
<div style="position:absolute;left:455.5px;top:530.5px;height:14.9px;line-height:14.9px;font-size:13px;font-weight:400;color:#30363f;letter-spacing:-0.35px;white-space:nowrap;width:74px;text-align:center;">3</div>
<div style="position:absolute;left:529.5px;top:530.5px;height:14.9px;line-height:14.9px;font-size:13px;font-weight:400;color:#30363f;letter-spacing:-0.35px;white-space:nowrap;width:105px;text-align:center;">0</div>
<div style="position:absolute;left:634.5px;top:530.5px;height:14.9px;line-height:14.9px;font-size:13px;font-weight:400;color:#30363f;letter-spacing:-0.35px;white-space:nowrap;width:162px;text-align:center;">0</div>
<div style="position:absolute;left:796.5px;top:530.5px;height:14.9px;line-height:14.9px;font-size:13px;font-weight:400;color:#30363f;letter-spacing:-0.35px;white-space:nowrap;width:85px;text-align:center;">2</div>
<div style="position:absolute;left:881.5px;top:530.5px;height:14.9px;line-height:14.9px;font-size:13px;font-weight:400;color:#30363f;letter-spacing:-0.35px;white-space:nowrap;width:105px;text-align:center;">0</div>
<div style="position:absolute;left:986.5px;top:530.5px;height:14.9px;line-height:14.9px;font-size:13px;font-weight:400;color:#30363f;letter-spacing:-0.35px;white-space:nowrap;width:162px;text-align:center;">0</div>
<div style="position:absolute;left:1148.5px;top:530.5px;height:14.9px;line-height:14.9px;font-size:13px;font-weight:400;color:#30363f;letter-spacing:-0.35px;white-space:nowrap;width:94px;text-align:center;">1</div>
<div style="position:absolute;left:1242.5px;top:530.5px;height:14.9px;line-height:14.9px;font-size:13px;font-weight:400;color:#30363f;letter-spacing:-0.35px;white-space:nowrap;width:105px;text-align:center;">0</div>
<div style="position:absolute;left:1347.5px;top:530.5px;height:14.9px;line-height:14.9px;font-size:13px;font-weight:400;color:#30363f;letter-spacing:-0.35px;white-space:nowrap;width:162px;text-align:center;">0</div>
<div style="position:absolute;left:1509.5px;top:530.5px;height:14.9px;line-height:14.9px;font-size:13px;font-weight:400;color:#3a7cb4;letter-spacing:-0.35px;white-space:nowrap;width:68px;text-align:center;">6</div>
<div style="position:absolute;left:323px;top:558.5px;width:14px;height:14px;background:#ffffff;border-radius:3.5px;border:1px solid #d2dee8;"></div>
<div style="position:absolute;left:350.5px;top:559.5px;height:14.9px;line-height:14.9px;font-size:13px;font-weight:400;color:#30363f;letter-spacing:-0.35px;white-space:nowrap;width:105px;text-align:center;">Федорова Е.Д.</div>
<div style="position:absolute;left:455.5px;top:559.5px;height:14.9px;line-height:14.9px;font-size:13px;font-weight:400;color:#30363f;letter-spacing:-0.35px;white-space:nowrap;width:74px;text-align:center;">5</div>
<div style="position:absolute;left:529.5px;top:559.5px;height:14.9px;line-height:14.9px;font-size:13px;font-weight:400;color:#30363f;letter-spacing:-0.35px;white-space:nowrap;width:105px;text-align:center;">0</div>
<div style="position:absolute;left:634.5px;top:559.5px;height:14.9px;line-height:14.9px;font-size:13px;font-weight:400;color:#30363f;letter-spacing:-0.35px;white-space:nowrap;width:162px;text-align:center;">0</div>
<div style="position:absolute;left:796.5px;top:559.5px;height:14.9px;line-height:14.9px;font-size:13px;font-weight:400;color:#30363f;letter-spacing:-0.35px;white-space:nowrap;width:85px;text-align:center;">0</div>
<div style="position:absolute;left:881.5px;top:559.5px;height:14.9px;line-height:14.9px;font-size:13px;font-weight:400;color:#30363f;letter-spacing:-0.35px;white-space:nowrap;width:105px;text-align:center;">0</div>
<div style="position:absolute;left:986.5px;top:559.5px;height:14.9px;line-height:14.9px;font-size:13px;font-weight:400;color:#30363f;letter-spacing:-0.35px;white-space:nowrap;width:162px;text-align:center;">0</div>
<div style="position:absolute;left:1148.5px;top:559.5px;height:14.9px;line-height:14.9px;font-size:13px;font-weight:400;color:#30363f;letter-spacing:-0.35px;white-space:nowrap;width:94px;text-align:center;">0</div>
<div style="position:absolute;left:1242.5px;top:559.5px;height:14.9px;line-height:14.9px;font-size:13px;font-weight:400;color:#30363f;letter-spacing:-0.35px;white-space:nowrap;width:105px;text-align:center;">0</div>
<div style="position:absolute;left:1347.5px;top:559.5px;height:14.9px;line-height:14.9px;font-size:13px;font-weight:400;color:#30363f;letter-spacing:-0.35px;white-space:nowrap;width:162px;text-align:center;">0</div>
<div style="position:absolute;left:1509.5px;top:559.5px;height:14.9px;line-height:14.9px;font-size:13px;font-weight:400;color:#30363f;letter-spacing:-0.35px;white-space:nowrap;width:68px;text-align:center;">5</div>
<div style="position:absolute;left:323px;top:587.5px;width:14px;height:14px;background:#ffffff;border-radius:3.5px;border:1px solid #d2dee8;"></div>
<div style="position:absolute;left:455.5px;top:588.5px;height:14.9px;line-height:14.9px;font-size:13px;font-weight:400;color:#30363f;letter-spacing:-0.35px;white-space:nowrap;width:74px;text-align:center;">14</div>
<div style="position:absolute;left:529.5px;top:588.5px;height:14.9px;line-height:14.9px;font-size:13px;font-weight:400;color:#30363f;letter-spacing:-0.35px;white-space:nowrap;width:105px;text-align:center;">0</div>
<div style="position:absolute;left:634.5px;top:588.5px;height:14.9px;line-height:14.9px;font-size:13px;font-weight:400;color:#30363f;letter-spacing:-0.35px;white-space:nowrap;width:162px;text-align:center;">0</div>
<div style="position:absolute;left:796.5px;top:588.5px;height:14.9px;line-height:14.9px;font-size:13px;font-weight:400;color:#30363f;letter-spacing:-0.35px;white-space:nowrap;width:85px;text-align:center;">2</div>
<div style="position:absolute;left:881.5px;top:588.5px;height:14.9px;line-height:14.9px;font-size:13px;font-weight:400;color:#30363f;letter-spacing:-0.35px;white-space:nowrap;width:105px;text-align:center;">0</div>
<div style="position:absolute;left:986.5px;top:588.5px;height:14.9px;line-height:14.9px;font-size:13px;font-weight:400;color:#30363f;letter-spacing:-0.35px;white-space:nowrap;width:162px;text-align:center;">0</div>
<div style="position:absolute;left:1148.5px;top:588.5px;height:14.9px;line-height:14.9px;font-size:13px;font-weight:400;color:#30363f;letter-spacing:-0.35px;white-space:nowrap;width:94px;text-align:center;">1</div>
<div style="position:absolute;left:1242.5px;top:588.5px;height:14.9px;line-height:14.9px;font-size:13px;font-weight:400;color:#30363f;letter-spacing:-0.35px;white-space:nowrap;width:105px;text-align:center;">0</div>
<div style="position:absolute;left:1347.5px;top:588.5px;height:14.9px;line-height:14.9px;font-size:13px;font-weight:400;color:#30363f;letter-spacing:-0.35px;white-space:nowrap;width:162px;text-align:center;">0</div>
<div style="position:absolute;left:1509.5px;top:588.5px;height:14.9px;line-height:14.9px;font-size:13px;font-weight:400;color:#30363f;letter-spacing:-0.35px;white-space:nowrap;width:68px;text-align:center;">17</div>
<div style="position:absolute;left:1639px;top:617.8px;height:14.4px;line-height:14.4px;font-size:12.5px;font-weight:400;color:#2d333b;letter-spacing:0px;white-space:nowrap;">1</div>
<div style="position:absolute;left:312px;top:676px;width:24px;height:24px;background:#ffffff;border-radius:4px;"></div><svg style="position:absolute;left:316px;top:681px" width="15" height="14" viewBox="0 0 15 14" fill="none" stroke="#4a5360" stroke-width="0.9" stroke-linecap="round" stroke-linejoin="round" ><rect x="1" y="10" width="3" height="3"/><rect x="6" y="6" width="3" height="7"/><rect x="11" y="1.5" width="3" height="11.5"/><path d="M1.2 6.5 L5.8 1.8 M3.2 1.6 H6 V4.3"/></svg><div style="position:absolute;left:341px;top:679.3px;height:18.4px;line-height:18.4px;font-size:16px;font-weight:700;color:#344252;letter-spacing:-0.35px;white-space:nowrap;">Мои задания</div>
<div style="position:absolute;left:1508px;top:676px;width:71px;height:24px;background:#e6eef5;border-radius:4px;"></div><svg style="position:absolute;left:1514px;top:682px" width="13" height="13" viewBox="0 0 13 13" fill="none" stroke="#2f7ab3" stroke-width="1.5" stroke-linecap="round" stroke-linejoin="round" ><path d="M1.5 1.5 H11.5 L7.6 6.3 V11.5 L5.4 10.3 V6.3 Z"/></svg><div style="position:absolute;left:1533px;top:681.6px;height:13.8px;line-height:13.8px;font-size:12px;font-weight:700;color:#2f7ab3;letter-spacing:-0.55px;white-space:nowrap;">Фильтр</div>
<div style="position:absolute;left:1589px;top:676px;width:84px;height:24px;background:#e6eef5;border-radius:4px;"></div><svg style="position:absolute;left:1593.2px;top:679.6px" width="15" height="15" viewBox="0 0 15 15" fill="none" stroke="#2f7ab3" stroke-width="1.7" stroke-linecap="round" stroke-linejoin="round" ><path d="M2.9 4.6 A5.6 5.6 0 0 1 12.9 5.9"/><path d="M3.3 10.0 A5.6 5.6 0 0 0 11.2 11.8"/><path d="M0.8 4.0 L2.1 8.2 L4.9 5.4 Z" fill="#2f7ab3" stroke-width="0.8"/><path d="M14.6 8.0 L14.3 11.9 L10.6 10.5 Z" fill="#2f7ab3" stroke-width="0.8"/></svg><div style="position:absolute;left:1614px;top:681.6px;height:13.8px;line-height:13.8px;font-size:12px;font-weight:700;color:#2f7ab3;letter-spacing:-0.55px;white-space:nowrap;">Обновить</div>
<div style="position:absolute;left:312px;top:712px;width:1361px;height:30px;background:#a2b8c8;border-radius:0px;border-radius:6px 6px 0 0;"></div><div style="position:absolute;left:312px;top:742px;width:1361px;height:174px;background:#ffffff;border-radius:0px;"></div><div style="position:absolute;left:312px;top:785px;width:1353px;height:1px;background:#d7e2ea;border-radius:0px;"></div><div style="position:absolute;left:312px;top:828px;width:1353px;height:1px;background:#d7e2ea;border-radius:0px;"></div><div style="position:absolute;left:312px;top:871px;width:1353px;height:1px;background:#d7e2ea;border-radius:0px;"></div><div style="position:absolute;left:312px;top:914px;width:1353px;height:1px;background:#d7e2ea;border-radius:0px;"></div><div style="position:absolute;left:350px;top:712px;width:1px;height:30px;background:#c3d2dd;border-radius:0px;"></div><div style="position:absolute;left:350px;top:742px;width:1px;height:174px;background:#d7e2ea;border-radius:0px;"></div><div style="position:absolute;left:427px;top:712px;width:1px;height:30px;background:#c3d2dd;border-radius:0px;"></div><div style="position:absolute;left:427px;top:742px;width:1px;height:174px;background:#d7e2ea;border-radius:0px;"></div><div style="position:absolute;left:543px;top:712px;width:1px;height:30px;background:#c3d2dd;border-radius:0px;"></div><div style="position:absolute;left:543px;top:742px;width:1px;height:174px;background:#d7e2ea;border-radius:0px;"></div><div style="position:absolute;left:655px;top:712px;width:1px;height:30px;background:#c3d2dd;border-radius:0px;"></div><div style="position:absolute;left:655px;top:742px;width:1px;height:174px;background:#d7e2ea;border-radius:0px;"></div><div style="position:absolute;left:827px;top:712px;width:1px;height:30px;background:#c3d2dd;border-radius:0px;"></div><div style="position:absolute;left:827px;top:742px;width:1px;height:174px;background:#d7e2ea;border-radius:0px;"></div><div style="position:absolute;left:909px;top:712px;width:1px;height:30px;background:#c3d2dd;border-radius:0px;"></div><div style="position:absolute;left:909px;top:742px;width:1px;height:174px;background:#d7e2ea;border-radius:0px;"></div><div style="position:absolute;left:1155px;top:712px;width:1px;height:30px;background:#c3d2dd;border-radius:0px;"></div><div style="position:absolute;left:1155px;top:742px;width:1px;height:174px;background:#d7e2ea;border-radius:0px;"></div><div style="position:absolute;left:1261px;top:712px;width:1px;height:30px;background:#c3d2dd;border-radius:0px;"></div><div style="position:absolute;left:1261px;top:742px;width:1px;height:174px;background:#d7e2ea;border-radius:0px;"></div><div style="position:absolute;left:1350px;top:712px;width:1px;height:30px;background:#c3d2dd;border-radius:0px;"></div><div style="position:absolute;left:1350px;top:742px;width:1px;height:174px;background:#d7e2ea;border-radius:0px;"></div><div style="position:absolute;left:1443px;top:712px;width:1px;height:30px;background:#c3d2dd;border-radius:0px;"></div><div style="position:absolute;left:1443px;top:742px;width:1px;height:174px;background:#d7e2ea;border-radius:0px;"></div><div style="position:absolute;left:1531px;top:712px;width:1px;height:30px;background:#c3d2dd;border-radius:0px;"></div><div style="position:absolute;left:1531px;top:742px;width:1px;height:174px;background:#d7e2ea;border-radius:0px;"></div><div style="position:absolute;left:359px;top:720.3px;height:14.4px;line-height:14.4px;font-size:12.5px;font-weight:700;color:#ffffff;letter-spacing:-0.45px;white-space:nowrap;">Состояние</div><div style="position:absolute;left:436px;top:720.3px;height:14.4px;line-height:14.4px;font-size:12.5px;font-weight:700;color:#ffffff;letter-spacing:-0.45px;white-space:nowrap;">Выполнить к</div><div style="position:absolute;left:552px;top:720.3px;height:14.4px;line-height:14.4px;font-size:12.5px;font-weight:700;color:#ffffff;letter-spacing:-0.45px;white-space:nowrap;">Информация</div><div style="position:absolute;left:664px;top:720.3px;height:14.4px;line-height:14.4px;font-size:12.5px;font-weight:700;color:#ffffff;letter-spacing:-0.45px;white-space:nowrap;">Исполнитель</div><div style="position:absolute;left:836px;top:720.3px;height:14.4px;line-height:14.4px;font-size:12.5px;font-weight:700;color:#ffffff;letter-spacing:-0.45px;white-space:nowrap;">Автор</div><div style="position:absolute;left:918px;top:720.3px;height:14.4px;line-height:14.4px;font-size:12.5px;font-weight:700;color:#ffffff;letter-spacing:-0.45px;white-space:nowrap;">Подразделение автора</div><div style="position:absolute;left:1164px;top:720.3px;height:14.4px;line-height:14.4px;font-size:12.5px;font-weight:700;color:#ffffff;letter-spacing:-0.45px;white-space:nowrap;">Изменено</div><div style="position:absolute;left:1270px;top:720.3px;height:14.4px;line-height:14.4px;font-size:12.5px;font-weight:700;color:#ffffff;letter-spacing:-0.45px;white-space:nowrap;">Карточка</div><div style="position:absolute;left:1359px;top:720.3px;height:14.4px;line-height:14.4px;font-size:12.5px;font-weight:700;color:#ffffff;letter-spacing:-0.45px;white-space:nowrap;">Тип карточки</div><div style="position:absolute;left:1452px;top:720.3px;height:14.4px;line-height:14.4px;font-size:12.5px;font-weight:700;color:#ffffff;letter-spacing:-0.45px;white-space:nowrap;">Тип задания</div><div style="position:absolute;left:1540px;top:720.3px;height:14.4px;line-height:14.4px;font-size:12.5px;font-weight:700;color:#ffffff;letter-spacing:-0.45px;white-space:nowrap;">Завершить</div><svg style="position:absolute;left:1229px;top:724px" width="10" height="6" viewBox="0 0 10 6" fill="none" stroke="#ffffff" stroke-width="1.8" stroke-linecap="round" stroke-linejoin="round" ><path d="M1 1 L5.0 5 L9 1"/></svg><svg style="position:absolute;left:1649px;top:719px" width="14" height="15" viewBox="0 0 14 15" fill="none" stroke="#fff" stroke-width="1.6" stroke-linecap="round" stroke-linejoin="round" ><path d="M1 2.5 H9 M1 7.5 H13 M5 12.5 H13"/><circle cx="10.8" cy="2.5" r="1.8" fill="#a2b8c8"/><circle cx="6.5" cy="7.5" r="1.8" fill="#ffffff"/><circle cx="2.8" cy="12.5" r="1.8" fill="#a2b8c8"/></svg><div style="position:absolute;left:312px;top:916px;width:1361px;height:30px;background:#e7eff5;border-radius:0px;border-radius:0 0 6px 6px;"></div><div style="position:absolute;left:323.5px;top:922.6px;height:14.1px;line-height:14.1px;font-size:12.3px;font-weight:400;color:#8d9aa6;letter-spacing:-0.1px;white-space:nowrap;">6 строк</div><svg style="position:absolute;left:1583px;top:925.0px" width="10" height="10" viewBox="0 0 10 10" fill="none" stroke="#8fb3cb" stroke-width="1.1" stroke-linecap="round" stroke-linejoin="round" ><path d="M1 0.5 V9.5 M8.5 0.5 L3.5 5 L8.5 9.5"/></svg><svg style="position:absolute;left:1606px;top:925.0px" width="7" height="10" viewBox="0 0 7 10" fill="none" stroke="#8fb3cb" stroke-width="1.1" stroke-linecap="round" stroke-linejoin="round" ><path d="M6 0.5 L1.2 5 L6 9.5"/></svg><svg style="position:absolute;left:1656px;top:925.0px" width="7" height="10" viewBox="0 0 7 10" fill="none" stroke="#8fb3cb" stroke-width="1.1" stroke-linecap="round" stroke-linejoin="round" ><path d="M1 0.5 L5.8 5 L1 9.5"/></svg>
<div style="position:absolute;left:323px;top:755.5px;width:14px;height:14px;background:#ffffff;border-radius:3.5px;border:1px solid #d2dee8;"></div>
<div style="position:absolute;left:358px;top:756.5px;height:14.9px;line-height:14.9px;font-size:13px;font-weight:400;color:#30363f;letter-spacing:-0.35px;white-space:nowrap;">Отложено</div>
<div style="position:absolute;left:435px;top:750.0px;height:14.9px;line-height:14.9px;font-size:13px;font-weight:400;color:#30363f;letter-spacing:-0.35px;white-space:nowrap;">09.10.2024</div>
<div style="position:absolute;left:435px;top:764.0px;height:14.9px;line-height:14.9px;font-size:13px;font-weight:400;color:#30363f;letter-spacing:-0.35px;white-space:nowrap;">14:00:00</div>
<div style="position:absolute;left:551px;top:750.0px;height:14.9px;line-height:14.9px;font-size:13px;font-weight:400;color:#30363f;letter-spacing:-0.35px;white-space:nowrap;">Подписание</div>
<div style="position:absolute;left:551px;top:764.0px;height:14.9px;line-height:14.9px;font-size:13px;font-weight:400;color:#30363f;letter-spacing:-0.35px;white-space:nowrap;">приказа</div>
<div style="position:absolute;left:663px;top:756.5px;height:14.9px;line-height:14.9px;font-size:13px;font-weight:400;color:#30363f;letter-spacing:-0.35px;white-space:nowrap;">Росавтометромотовододор</div>
<div style="position:absolute;left:835px;top:750.0px;height:14.9px;line-height:14.9px;font-size:13px;font-weight:400;color:#30363f;letter-spacing:-0.35px;white-space:nowrap;">Трошина</div>
<div style="position:absolute;left:835px;top:764.0px;height:14.9px;line-height:14.9px;font-size:13px;font-weight:400;color:#30363f;letter-spacing:-0.35px;white-space:nowrap;">Л.Е.</div>
<div style="position:absolute;left:917px;top:756.5px;height:14.9px;line-height:14.9px;font-size:13px;font-weight:400;color:#30363f;letter-spacing:-0.35px;white-space:nowrap;">Мир дверей, Росавтометромотовододор</div>
<div style="position:absolute;left:1163px;top:750.0px;height:14.9px;line-height:14.9px;font-size:13px;font-weight:400;color:#30363f;letter-spacing:-0.35px;white-space:nowrap;">10.10.2024</div>
<div style="position:absolute;left:1163px;top:764.0px;height:14.9px;line-height:14.9px;font-size:13px;font-weight:400;color:#30363f;letter-spacing:-0.35px;white-space:nowrap;">13:40:56</div>
<div style="position:absolute;left:1269px;top:756.5px;height:14.9px;line-height:14.9px;font-size:13px;font-weight:400;color:#30363f;letter-spacing:-0.35px;white-space:nowrap;">Ппр-000001</div>
<div style="position:absolute;left:1358px;top:756.5px;height:14.9px;line-height:14.9px;font-size:13px;font-weight:400;color:#30363f;letter-spacing:-0.35px;white-space:nowrap;">Приказ</div>
<div style="position:absolute;left:1451px;top:756.5px;height:14.9px;line-height:14.9px;font-size:13px;font-weight:400;color:#30363f;letter-spacing:-0.35px;white-space:nowrap;">Задача</div>
<div style="position:absolute;left:1539px;top:756.5px;height:14.9px;line-height:14.9px;font-size:13px;font-weight:400;color:#30363f;letter-spacing:-0.35px;white-space:nowrap;">3,5 дня</div>
<div style="position:absolute;left:323px;top:798.5px;width:14px;height:14px;background:#ffffff;border-radius:3.5px;border:1px solid #d2dee8;"></div>
<div style="position:absolute;left:358px;top:799.5px;height:14.9px;line-height:14.9px;font-size:13px;font-weight:400;color:#30363f;letter-spacing:-0.35px;white-space:nowrap;">Новое</div>
<div style="position:absolute;left:435px;top:793.0px;height:14.9px;line-height:14.9px;font-size:13px;font-weight:400;color:#30363f;letter-spacing:-0.35px;white-space:nowrap;">10.10.2024</div>
<div style="position:absolute;left:435px;top:807.0px;height:14.9px;line-height:14.9px;font-size:13px;font-weight:400;color:#30363f;letter-spacing:-0.35px;white-space:nowrap;">14:00:00</div>
<div style="position:absolute;left:551px;top:793.0px;height:14.9px;line-height:14.9px;font-size:13px;font-weight:400;color:#30363f;letter-spacing:-0.35px;white-space:nowrap;">Открытие</div>
<div style="position:absolute;left:551px;top:807.0px;height:14.9px;line-height:14.9px;font-size:13px;font-weight:400;color:#30363f;letter-spacing:-0.35px;white-space:nowrap;">приказа</div>
<div style="position:absolute;left:663px;top:799.5px;height:14.9px;line-height:14.9px;font-size:13px;font-weight:400;color:#30363f;letter-spacing:-0.35px;white-space:nowrap;">Росавтометромотовододор</div>
<div style="position:absolute;left:835px;top:793.0px;height:14.9px;line-height:14.9px;font-size:13px;font-weight:400;color:#30363f;letter-spacing:-0.35px;white-space:nowrap;">Крылова</div>
<div style="position:absolute;left:835px;top:807.0px;height:14.9px;line-height:14.9px;font-size:13px;font-weight:400;color:#30363f;letter-spacing:-0.35px;white-space:nowrap;">Е.А.</div>
<div style="position:absolute;left:917px;top:793.0px;height:14.9px;line-height:14.9px;font-size:13px;font-weight:400;color:#30363f;letter-spacing:-0.35px;white-space:nowrap;">Алмазы Сибири, Мир дверей,</div>
<div style="position:absolute;left:917px;top:807.0px;height:14.9px;line-height:14.9px;font-size:13px;font-weight:400;color:#30363f;letter-spacing:-0.35px;white-space:nowrap;">Росавтометромотовододор</div>
<div style="position:absolute;left:1163px;top:793.0px;height:14.9px;line-height:14.9px;font-size:13px;font-weight:400;color:#30363f;letter-spacing:-0.35px;white-space:nowrap;">03.10.2024</div>
<div style="position:absolute;left:1163px;top:807.0px;height:14.9px;line-height:14.9px;font-size:13px;font-weight:400;color:#30363f;letter-spacing:-0.35px;white-space:nowrap;">13:34:42</div>
<div style="position:absolute;left:1269px;top:799.5px;height:14.9px;line-height:14.9px;font-size:13px;font-weight:400;color:#30363f;letter-spacing:-0.35px;white-space:nowrap;">Ппр-000003</div>
<div style="position:absolute;left:1358px;top:799.5px;height:14.9px;line-height:14.9px;font-size:13px;font-weight:400;color:#30363f;letter-spacing:-0.35px;white-space:nowrap;">Приказ</div>
<div style="position:absolute;left:1451px;top:799.5px;height:14.9px;line-height:14.9px;font-size:13px;font-weight:400;color:#30363f;letter-spacing:-0.35px;white-space:nowrap;">Задача</div>
<div style="position:absolute;left:1539px;top:799.5px;height:14.9px;line-height:14.9px;font-size:13px;font-weight:400;color:#30363f;letter-spacing:-0.35px;white-space:nowrap;">4,5 дня</div>
<div style="position:absolute;left:323px;top:841.5px;width:14px;height:14px;background:#ffffff;border-radius:3.5px;border:1px solid #d2dee8;"></div>
<div style="position:absolute;left:358px;top:842.5px;height:14.9px;line-height:14.9px;font-size:13px;font-weight:400;color:#30363f;letter-spacing:-0.35px;white-space:nowrap;">В работе</div>
<div style="position:absolute;left:435px;top:836.0px;height:14.9px;line-height:14.9px;font-size:13px;font-weight:400;color:#30363f;letter-spacing:-0.35px;white-space:nowrap;">09.10.2024</div>
<div style="position:absolute;left:435px;top:850.0px;height:14.9px;line-height:14.9px;font-size:13px;font-weight:400;color:#30363f;letter-spacing:-0.35px;white-space:nowrap;">14:00:00</div>
<div style="position:absolute;left:551px;top:836.0px;height:14.9px;line-height:14.9px;font-size:13px;font-weight:400;color:#30363f;letter-spacing:-0.35px;white-space:nowrap;">Печать журнала</div>
<div style="position:absolute;left:551px;top:850.0px;height:14.9px;line-height:14.9px;font-size:13px;font-weight:400;color:#30363f;letter-spacing:-0.35px;white-space:nowrap;">учета</div>
<div style="position:absolute;left:663px;top:842.5px;height:14.9px;line-height:14.9px;font-size:13px;font-weight:400;color:#30363f;letter-spacing:-0.35px;white-space:nowrap;">Николаев Д.В.</div>
<div style="position:absolute;left:835px;top:836.0px;height:14.9px;line-height:14.9px;font-size:13px;font-weight:400;color:#30363f;letter-spacing:-0.35px;white-space:nowrap;">Наумов</div>
<div style="position:absolute;left:835px;top:850.0px;height:14.9px;line-height:14.9px;font-size:13px;font-weight:400;color:#30363f;letter-spacing:-0.35px;white-space:nowrap;">Н.Н.</div>
<div style="position:absolute;left:917px;top:836.0px;height:14.9px;line-height:14.9px;font-size:13px;font-weight:400;color:#30363f;letter-spacing:-0.35px;white-space:nowrap;">Богатства Чулека, Мир дверей,</div>
<div style="position:absolute;left:917px;top:850.0px;height:14.9px;line-height:14.9px;font-size:13px;font-weight:400;color:#30363f;letter-spacing:-0.35px;white-space:nowrap;">Росавтометромотовододор</div>
<div style="position:absolute;left:1163px;top:836.0px;height:14.9px;line-height:14.9px;font-size:13px;font-weight:400;color:#30363f;letter-spacing:-0.35px;white-space:nowrap;">03.10.2024</div>
<div style="position:absolute;left:1163px;top:850.0px;height:14.9px;line-height:14.9px;font-size:13px;font-weight:400;color:#30363f;letter-spacing:-0.35px;white-space:nowrap;">13:32:27</div>
<div style="position:absolute;left:1269px;top:842.5px;height:14.9px;line-height:14.9px;font-size:13px;font-weight:400;color:#30363f;letter-spacing:-0.35px;white-space:nowrap;">Вн-000014</div>
<div style="position:absolute;left:1358px;top:842.5px;height:14.9px;line-height:14.9px;font-size:13px;font-weight:400;color:#30363f;letter-spacing:-0.35px;white-space:nowrap;">Документ</div>
<div style="position:absolute;left:1451px;top:842.5px;height:14.9px;line-height:14.9px;font-size:13px;font-weight:400;color:#30363f;letter-spacing:-0.35px;white-space:nowrap;">Задача</div>
<div style="position:absolute;left:1539px;top:842.5px;height:14.9px;line-height:14.9px;font-size:13px;font-weight:400;color:#30363f;letter-spacing:-0.35px;white-space:nowrap;">3,5 дня</div>
<div style="position:absolute;left:323px;top:884.5px;width:14px;height:14px;background:#ffffff;border-radius:3.5px;border:1px solid #d2dee8;"></div>
<div style="position:absolute;left:358px;top:885.5px;height:14.9px;line-height:14.9px;font-size:13px;font-weight:400;color:#30363f;letter-spacing:-0.35px;white-space:nowrap;">В работе</div>
<div style="position:absolute;left:435px;top:879.0px;height:14.9px;line-height:14.9px;font-size:13px;font-weight:400;color:#30363f;letter-spacing:-0.35px;white-space:nowrap;">14.10.2024</div>
<div style="position:absolute;left:435px;top:893.0px;height:14.9px;line-height:14.9px;font-size:13px;font-weight:400;color:#30363f;letter-spacing:-0.35px;white-space:nowrap;">14:00:00</div>
<div style="position:absolute;left:551px;top:879.0px;height:14.9px;line-height:14.9px;font-size:13px;font-weight:400;color:#30363f;letter-spacing:-0.35px;white-space:nowrap;">Поиск журнала</div>
<div style="position:absolute;left:551px;top:893.0px;height:14.9px;line-height:14.9px;font-size:13px;font-weight:400;color:#30363f;letter-spacing:-0.35px;white-space:nowrap;">учёта</div>
<div style="position:absolute;left:663px;top:885.5px;height:14.9px;line-height:14.9px;font-size:13px;font-weight:400;color:#30363f;letter-spacing:-0.35px;white-space:nowrap;">Николаев Д.В.</div>
<div style="position:absolute;left:835px;top:879.0px;height:14.9px;line-height:14.9px;font-size:13px;font-weight:400;color:#30363f;letter-spacing:-0.35px;white-space:nowrap;">Цветкова</div>
<div style="position:absolute;left:835px;top:893.0px;height:14.9px;line-height:14.9px;font-size:13px;font-weight:400;color:#30363f;letter-spacing:-0.35px;white-space:nowrap;">А.М.</div>
<div style="position:absolute;left:917px;top:879.0px;height:14.9px;line-height:14.9px;font-size:13px;font-weight:400;color:#30363f;letter-spacing:-0.35px;white-space:nowrap;">Богатства Чулека,</div>
<div style="position:absolute;left:917px;top:893.0px;height:14.9px;line-height:14.9px;font-size:13px;font-weight:400;color:#30363f;letter-spacing:-0.35px;white-space:nowrap;">Росавтометромотовододор</div>
<div style="position:absolute;left:1163px;top:879.0px;height:14.9px;line-height:14.9px;font-size:13px;font-weight:400;color:#30363f;letter-spacing:-0.35px;white-space:nowrap;">03.10.2024</div>
<div style="position:absolute;left:1163px;top:893.0px;height:14.9px;line-height:14.9px;font-size:13px;font-weight:400;color:#30363f;letter-spacing:-0.35px;white-space:nowrap;">13:16:46</div>
<div style="position:absolute;left:1269px;top:885.5px;height:14.9px;line-height:14.9px;font-size:13px;font-weight:400;color:#30363f;letter-spacing:-0.35px;white-space:nowrap;">Вн-000011</div>
<div style="position:absolute;left:1358px;top:885.5px;height:14.9px;line-height:14.9px;font-size:13px;font-weight:400;color:#30363f;letter-spacing:-0.35px;white-space:nowrap;">Документ</div>
<div style="position:absolute;left:1451px;top:885.5px;height:14.9px;line-height:14.9px;font-size:13px;font-weight:400;color:#30363f;letter-spacing:-0.35px;white-space:nowrap;">Задача</div>
<div style="position:absolute;left:1539px;top:885.5px;height:14.9px;line-height:14.9px;font-size:13px;font-weight:400;color:#30363f;letter-spacing:-0.35px;white-space:nowrap;">6,5 дней</div>
<div style="position:absolute;left:1624px;top:923.3px;height:14.4px;line-height:14.4px;font-size:12.5px;font-weight:400;color:#2d333b;letter-spacing:-0.9px;white-space:nowrap;">1 / 1</div>
<div style="position:absolute;left:1665px;top:742px;width:8px;height:174px;background:#c6d8e4;border-radius:0px;"></div>
<svg style="position:absolute;left:1665px;top:745px" width="8" height="6" viewBox="0 0 8 6" fill="none" stroke="none" stroke-width="1.2" stroke-linecap="round" stroke-linejoin="round" ><path d="M0.5 5 L4 1 L7.5 5 Z" fill="#6d7d88" stroke="none"/></svg>
<div style="position:absolute;left:1666px;top:754px;width:7px;height:98px;background:#6d7d88;border-radius:0px;"></div>
<svg style="position:absolute;left:1665px;top:907px" width="8" height="6" viewBox="0 0 8 6" fill="none" stroke="none" stroke-width="1.2" stroke-linecap="round" stroke-linejoin="round" ><path d="M0.5 1 L4 5 L7.5 1 Z" fill="#6d7d88" stroke="none"/></svg>
<div style="position:absolute;left:1685px;top:358px;width:8px;height:598px;background:#c9dbe7;border-radius:0px;"></div>
<svg style="position:absolute;left:1685px;top:361px" width="8" height="6" viewBox="0 0 8 6" fill="none" stroke="none" stroke-width="1.2" stroke-linecap="round" stroke-linejoin="round" ><path d="M0.5 5 L4 1 L7.5 5 Z" fill="#6d7d88" stroke="none"/></svg>
<div style="position:absolute;left:1685px;top:369px;width:8px;height:572px;background:#6b7b87;border-radius:0px;"></div>
<svg style="position:absolute;left:1685px;top:948px" width="8" height="6" viewBox="0 0 8 6" fill="none" stroke="none" stroke-width="1.2" stroke-linecap="round" stroke-linejoin="round" ><path d="M0.5 1 L4 5 L7.5 1 Z" fill="#6d7d88" stroke="none"/></svg>
</div></body></html>
